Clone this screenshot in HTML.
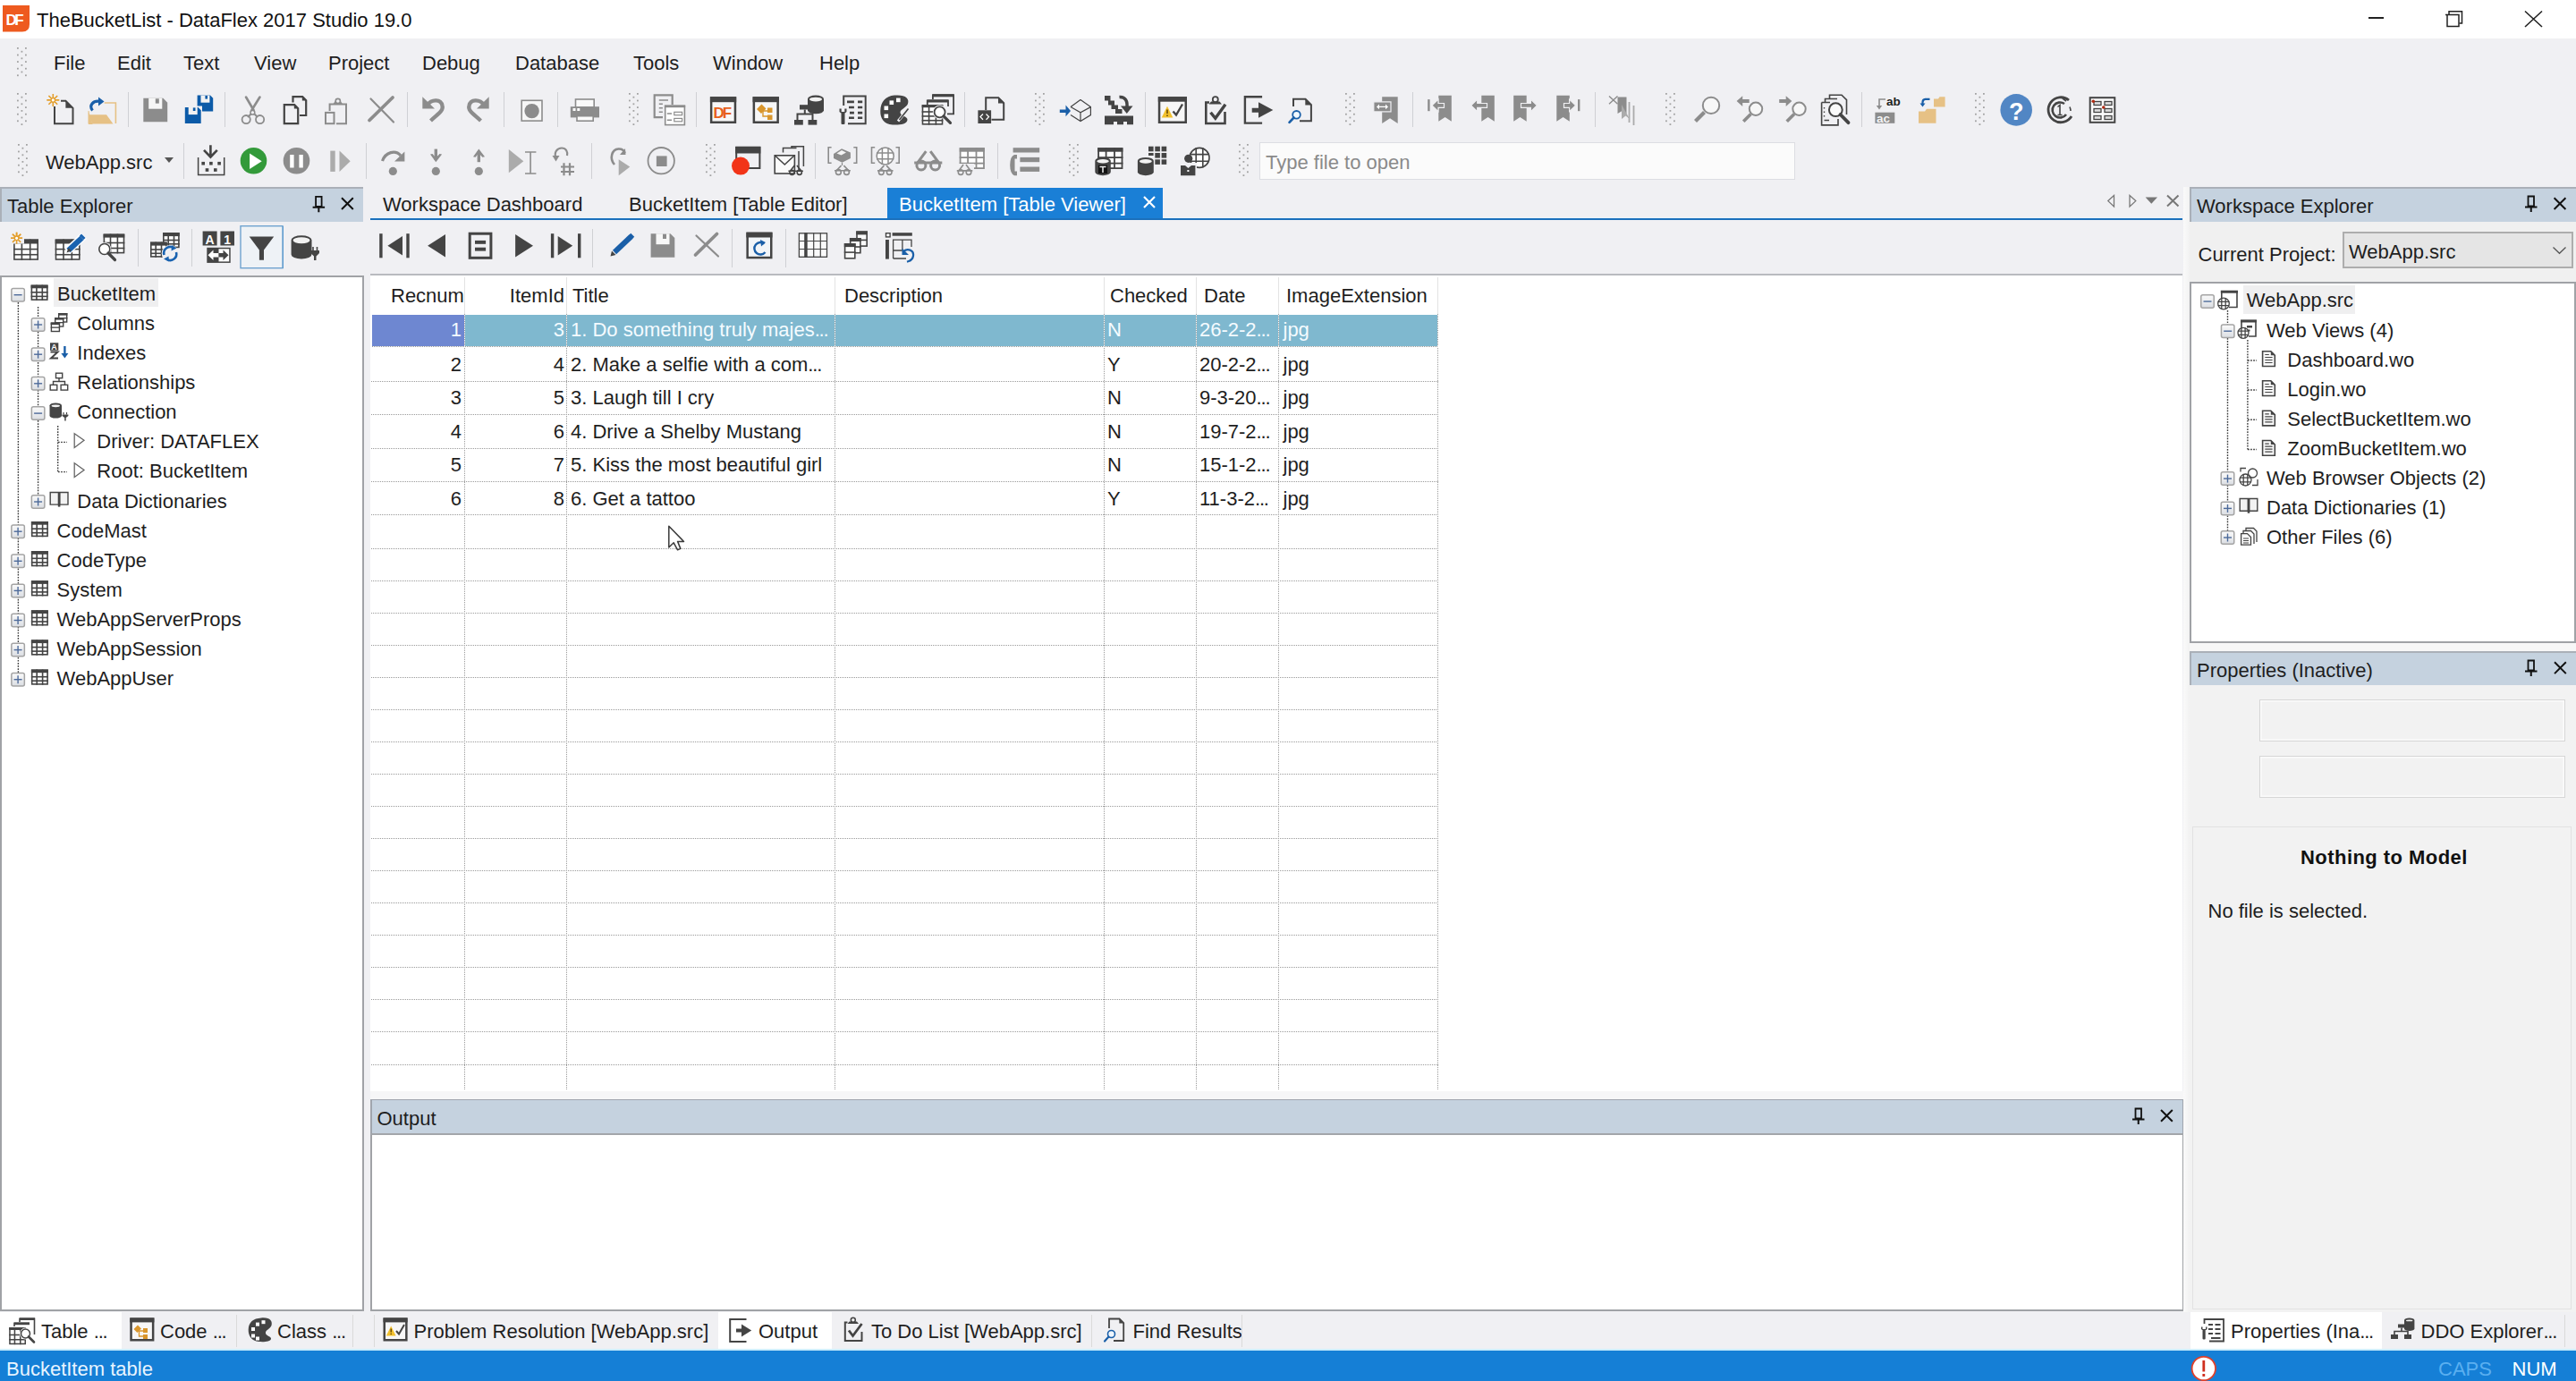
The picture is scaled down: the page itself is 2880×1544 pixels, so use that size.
<!DOCTYPE html><html><head><meta charset="utf-8"><title>DataFlex Studio</title><style>
*{margin:0;padding:0}
html,body{width:2880px;height:1544px;overflow:hidden;background:#f0f0f3}
body{position:relative;font-family:"Liberation Sans",sans-serif}
.t{position:absolute;font-family:"Liberation Sans",sans-serif;line-height:25px;white-space:nowrap}
.r{position:absolute;display:block}
.ov{position:absolute;left:0;top:0;overflow:visible}
.grip{position:absolute;width:11px;background-image:radial-gradient(circle,#9a9a9a 0.9px,transparent 1.2px);background-size:5.5px 5.5px}
.hd{position:absolute;height:1px;background-image:linear-gradient(90deg,#9a9a9a 50%,transparent 50%);background-size:2px 1px}
.vd{position:absolute;width:1px;background-image:linear-gradient(180deg,#9a9a9a 50%,transparent 50%);background-size:1px 2px}
</style></head><body><div class="r" style="left:0px;top:0px;width:2880px;height:43px;background:#fff"></div>
<div class="t" style="left:41px;top:9.9px;font-size:22px;color:#111;font-weight:normal;">TheBucketList - DataFlex 2017 Studio 19.0</div>
<div class="r" style="left:2648px;top:19px;width:17px;height:2px;background:#222"></div>
<div class="r" style="left:0px;top:43px;width:2880px;height:166px;background:#f0f0f3"></div>
<div class="t" style="left:60px;top:58.2px;font-size:22px;color:#1e1e1e;font-weight:normal;">File</div>
<div class="t" style="left:131px;top:58.2px;font-size:22px;color:#1e1e1e;font-weight:normal;">Edit</div>
<div class="t" style="left:205px;top:58.2px;font-size:22px;color:#1e1e1e;font-weight:normal;">Text</div>
<div class="t" style="left:284px;top:58.2px;font-size:22px;color:#1e1e1e;font-weight:normal;">View</div>
<div class="t" style="left:367px;top:58.2px;font-size:22px;color:#1e1e1e;font-weight:normal;">Project</div>
<div class="t" style="left:472px;top:58.2px;font-size:22px;color:#1e1e1e;font-weight:normal;">Debug</div>
<div class="t" style="left:576px;top:58.2px;font-size:22px;color:#1e1e1e;font-weight:normal;">Database</div>
<div class="t" style="left:708px;top:58.2px;font-size:22px;color:#1e1e1e;font-weight:normal;">Tools</div>
<div class="t" style="left:797px;top:58.2px;font-size:22px;color:#1e1e1e;font-weight:normal;">Window</div>
<div class="t" style="left:916px;top:58.2px;font-size:22px;color:#1e1e1e;font-weight:normal;">Help</div>
<div class="r" style="left:143px;top:103px;width:1px;height:39px;background:#cfd0d4"></div>
<div class="r" style="left:251px;top:103px;width:1px;height:39px;background:#cfd0d4"></div>
<div class="r" style="left:455px;top:103px;width:1px;height:39px;background:#cfd0d4"></div>
<div class="r" style="left:563px;top:103px;width:1px;height:39px;background:#cfd0d4"></div>
<div class="r" style="left:623px;top:103px;width:1px;height:39px;background:#cfd0d4"></div>
<div class="r" style="left:778px;top:103px;width:1px;height:39px;background:#cfd0d4"></div>
<div class="r" style="left:1078px;top:103px;width:1px;height:39px;background:#cfd0d4"></div>
<div class="r" style="left:1280px;top:103px;width:1px;height:39px;background:#cfd0d4"></div>
<div class="r" style="left:1579px;top:103px;width:1px;height:39px;background:#cfd0d4"></div>
<div class="r" style="left:1783px;top:103px;width:1px;height:39px;background:#cfd0d4"></div>
<div class="r" style="left:2081px;top:103px;width:1px;height:39px;background:#cfd0d4"></div>
<div class="t" style="left:51px;top:168.9px;font-size:22px;color:#1e1e1e;font-weight:normal;">WebApp.src</div>
<svg class="r" style="left:184px;top:176px" width="10" height="6" viewBox="0 0 10 6"><path d="M0 0H10L5 6Z" fill="#555"/></svg>
<div class="r" style="left:205px;top:160px;width:1px;height:40px;background:#cfd0d4"></div>
<div class="r" style="left:409px;top:160px;width:1px;height:40px;background:#cfd0d4"></div>
<div class="r" style="left:661px;top:160px;width:1px;height:40px;background:#cfd0d4"></div>
<div class="r" style="left:911px;top:160px;width:1px;height:40px;background:#cfd0d4"></div>
<div class="r" style="left:1115px;top:160px;width:1px;height:40px;background:#cfd0d4"></div>
<div class="r" style="left:1408px;top:158.5px;width:598.5px;height:42.0px;background:#fbfbfb;border:1px solid #dcdde2;box-sizing:border-box"></div>
<div class="t" style="left:1415px;top:168.9px;font-size:22px;color:#8a8a8a;font-weight:normal;">Type file to open</div>
<div class="r" style="left:0px;top:209px;width:2880px;height:1258px;background:#f0f0f3"></div>
<div class="r" style="left:0px;top:209px;width:406px;height:38.5px;background:#c5d2df;border-top:2px solid #aab0b8;border-left:2px solid #aab0b8;box-sizing:border-box"></div>
<div class="t" style="left:8px;top:218.1px;font-size:22px;color:#1e1e1e;font-weight:normal;">Table Explorer</div>
<div class="r" style="left:154px;top:256px;width:1px;height:42px;background:#cfd0d4"></div>
<div class="r" style="left:214px;top:256px;width:1px;height:42px;background:#cfd0d4"></div>
<div class="r" style="left:268.5px;top:252.5px;width:48.0px;height:47.0px;border:1px solid #3b8fd8;box-sizing:border-box"></div>
<div class="r" style="left:0px;top:308px;width:407px;height:1157.5px;background:#fff;border:2px solid #a0a2a6;box-sizing:border-box"></div>
<div class="r" style="left:60.3px;top:311.4px;width:116.3px;height:32.10000000000002px;background:#efeff0"></div>
<div class="t" style="left:64px;top:315.8px;font-size:22px;color:#1e1e1e;font-weight:normal;">BucketItem</div>
<div class="t" style="left:86.3px;top:348.9px;font-size:22px;color:#1e1e1e;font-weight:normal;">Columns</div>
<div class="t" style="left:86.3px;top:382.0px;font-size:22px;color:#1e1e1e;font-weight:normal;">Indexes</div>
<div class="t" style="left:86.3px;top:415.1px;font-size:22px;color:#1e1e1e;font-weight:normal;">Relationships</div>
<div class="t" style="left:86.3px;top:448.2px;font-size:22px;color:#1e1e1e;font-weight:normal;">Connection</div>
<div class="t" style="left:108.3px;top:481.3px;font-size:22px;color:#1e1e1e;font-weight:normal;">Driver: DATAFLEX</div>
<div class="t" style="left:108.3px;top:514.4px;font-size:22px;color:#1e1e1e;font-weight:normal;">Root: BucketItem</div>
<div class="t" style="left:86.3px;top:547.5px;font-size:22px;color:#1e1e1e;font-weight:normal;">Data Dictionaries</div>
<div class="t" style="left:63.6px;top:580.6px;font-size:22px;color:#1e1e1e;font-weight:normal;">CodeMast</div>
<div class="t" style="left:63.6px;top:613.7px;font-size:22px;color:#1e1e1e;font-weight:normal;">CodeType</div>
<div class="t" style="left:63.6px;top:646.8px;font-size:22px;color:#1e1e1e;font-weight:normal;">System</div>
<div class="t" style="left:63.6px;top:679.9px;font-size:22px;color:#1e1e1e;font-weight:normal;">WebAppServerProps</div>
<div class="t" style="left:63.6px;top:713.0px;font-size:22px;color:#1e1e1e;font-weight:normal;">WebAppSession</div>
<div class="t" style="left:63.6px;top:746.1px;font-size:22px;color:#1e1e1e;font-weight:normal;">WebAppUser</div>
<div class="t" style="left:428px;top:215.7px;font-size:22px;color:#1e1e1e;font-weight:normal;">Workspace Dashboard</div>
<div class="t" style="left:703px;top:215.7px;font-size:22px;color:#1e1e1e;font-weight:normal;">BucketItem [Table Editor]</div>
<div class="r" style="left:991.5px;top:209.5px;width:308.5px;height:36.5px;background:#1a7fd6"></div>
<div class="t" style="left:1005px;top:215.7px;font-size:22px;color:#fff;font-weight:normal;">BucketItem [Table Viewer]</div>
<div class="r" style="left:414px;top:242.5px;width:577.5px;height:1.8000000000000114px;background:#e6f2fb"></div>
<div class="r" style="left:1300px;top:242.5px;width:1140px;height:1.8000000000000114px;background:#e6f2fb"></div>
<div class="r" style="left:414px;top:244.3px;width:2026px;height:2.0px;background:#1b70bb"></div>
<div class="r" style="left:662px;top:256px;width:1px;height:43px;background:#cfd0d4"></div>
<div class="r" style="left:818px;top:256px;width:1px;height:43px;background:#cfd0d4"></div>
<div class="r" style="left:878px;top:256px;width:1px;height:43px;background:#cfd0d4"></div>
<div class="r" style="left:414px;top:306px;width:2026px;height:914px;background:#fff;border-top:2px solid #b9bbbf;box-sizing:border-box"></div>
<div class="r" style="left:519.0px;top:310px;width:1.0px;height:41px;background:#e3e3e3"></div>
<div class="r" style="left:633.0px;top:310px;width:1.0px;height:41px;background:#e3e3e3"></div>
<div class="r" style="left:933.2px;top:310px;width:1.0px;height:41px;background:#e3e3e3"></div>
<div class="r" style="left:1233.5px;top:310px;width:1.0px;height:41px;background:#e3e3e3"></div>
<div class="r" style="left:1336.7px;top:310px;width:1.0px;height:41px;background:#e3e3e3"></div>
<div class="r" style="left:1429.3px;top:310px;width:1.0px;height:41px;background:#e3e3e3"></div>
<div class="r" style="left:1607.0px;top:310px;width:1.0px;height:41px;background:#e3e3e3"></div>
<div class="r" style="left:415.5px;top:351.5px;width:103.5px;height:35.5px;background:#6e87d1"></div>
<div class="r" style="left:520px;top:351.5px;width:1087px;height:35.5px;background:#7fb8cf"></div>
<div class="hd" style="left:415px;top:387.1px;width:1193px"></div>
<div class="hd" style="left:415px;top:425.5px;width:1193px"></div>
<div class="hd" style="left:415px;top:462.8px;width:1193px"></div>
<div class="hd" style="left:415px;top:500.5px;width:1193px"></div>
<div class="hd" style="left:415px;top:537.8px;width:1193px"></div>
<div class="hd" style="left:415px;top:575.3px;width:1193px"></div>
<div class="hd" style="left:415px;top:612.7px;width:1193px"></div>
<div class="hd" style="left:415px;top:648.8px;width:1193px"></div>
<div class="hd" style="left:415px;top:684.8px;width:1193px"></div>
<div class="hd" style="left:415px;top:720.8px;width:1193px"></div>
<div class="hd" style="left:415px;top:756.9px;width:1193px"></div>
<div class="hd" style="left:415px;top:792.9px;width:1193px"></div>
<div class="hd" style="left:415px;top:829.0px;width:1193px"></div>
<div class="hd" style="left:415px;top:865.0px;width:1193px"></div>
<div class="hd" style="left:415px;top:901.1px;width:1193px"></div>
<div class="hd" style="left:415px;top:937.1px;width:1193px"></div>
<div class="hd" style="left:415px;top:973.2px;width:1193px"></div>
<div class="hd" style="left:415px;top:1009.2px;width:1193px"></div>
<div class="hd" style="left:415px;top:1045.3px;width:1193px"></div>
<div class="hd" style="left:415px;top:1081.3px;width:1193px"></div>
<div class="hd" style="left:415px;top:1117.4px;width:1193px"></div>
<div class="hd" style="left:415px;top:1153.4px;width:1193px"></div>
<div class="hd" style="left:415px;top:1189.5px;width:1193px"></div>
<div class="vd" style="left:519.0px;top:351px;height:868px"></div>
<div class="vd" style="left:633.0px;top:351px;height:868px"></div>
<div class="vd" style="left:933.2px;top:351px;height:868px"></div>
<div class="vd" style="left:1233.5px;top:351px;height:868px"></div>
<div class="vd" style="left:1336.7px;top:351px;height:868px"></div>
<div class="vd" style="left:1429.3px;top:351px;height:868px"></div>
<div class="vd" style="left:1607.0px;top:351px;height:868px"></div>
<div class="vd" style="left:519.0px;top:351.5px;height:36px;background-image:linear-gradient(180deg,#ffffff 50%,transparent 50%)"></div>
<div class="vd" style="left:633.0px;top:351.5px;height:36px;background-image:linear-gradient(180deg,#ffffff 50%,transparent 50%)"></div>
<div class="vd" style="left:933.2px;top:351.5px;height:36px;background-image:linear-gradient(180deg,#ffffff 50%,transparent 50%)"></div>
<div class="vd" style="left:1233.5px;top:351.5px;height:36px;background-image:linear-gradient(180deg,#ffffff 50%,transparent 50%)"></div>
<div class="vd" style="left:1336.7px;top:351.5px;height:36px;background-image:linear-gradient(180deg,#ffffff 50%,transparent 50%)"></div>
<div class="vd" style="left:1429.3px;top:351.5px;height:36px;background-image:linear-gradient(180deg,#ffffff 50%,transparent 50%)"></div>
<div class="vd" style="left:1607.0px;top:351.5px;height:36px;background-image:linear-gradient(180deg,#ffffff 50%,transparent 50%)"></div>
<div class="hd" style="left:415px;top:387.1px;width:1193px;background-image:linear-gradient(90deg,#ffffff 50%,#9a9a9a 50%)"></div>
<div class="t" style="left:437px;top:317.9px;font-size:22px;color:#1e1e1e;font-weight:normal;">Recnum</div>
<div class="t" style="right:2249px;top:317.9px;font-size:22px;color:#1e1e1e;">ItemId</div>
<div class="t" style="left:640px;top:317.9px;font-size:22px;color:#1e1e1e;font-weight:normal;">Title</div>
<div class="t" style="left:944px;top:317.9px;font-size:22px;color:#1e1e1e;font-weight:normal;">Description</div>
<div class="t" style="left:1241px;top:317.9px;font-size:22px;color:#1e1e1e;font-weight:normal;">Checked</div>
<div class="t" style="left:1346px;top:317.9px;font-size:22px;color:#1e1e1e;font-weight:normal;">Date</div>
<div class="t" style="left:1438px;top:317.9px;font-size:22px;color:#1e1e1e;font-weight:normal;">ImageExtension</div>
<div class="t" style="right:2364px;top:356.4px;font-size:22px;color:#f4fbff;">1</div>
<div class="t" style="right:2249px;top:356.4px;font-size:22px;color:#f4fbff;">3</div>
<div class="t" style="left:638px;top:356.4px;font-size:22px;color:#f4fbff;font-weight:normal;">1. Do something truly majes<span style="letter-spacing:-1.2px">...</span></div>
<div class="t" style="left:1238px;top:356.4px;font-size:22px;color:#f4fbff;font-weight:normal;">N</div>
<div class="t" style="left:1341px;top:356.4px;font-size:22px;color:#f4fbff;font-weight:normal;">26-2-2<span style="letter-spacing:-1.2px">...</span></div>
<div class="t" style="left:1434.5px;top:356.4px;font-size:22px;color:#f4fbff;font-weight:normal;">jpg</div>
<div class="t" style="right:2364px;top:394.7px;font-size:22px;color:#1e1e1e;">2</div>
<div class="t" style="right:2249px;top:394.7px;font-size:22px;color:#1e1e1e;">4</div>
<div class="t" style="left:638px;top:394.7px;font-size:22px;color:#1e1e1e;font-weight:normal;">2. Make a selfie with a com<span style="letter-spacing:-1.2px">...</span></div>
<div class="t" style="left:1238px;top:394.7px;font-size:22px;color:#1e1e1e;font-weight:normal;">Y</div>
<div class="t" style="left:1341px;top:394.7px;font-size:22px;color:#1e1e1e;font-weight:normal;">20-2-2<span style="letter-spacing:-1.2px">...</span></div>
<div class="t" style="left:1434.5px;top:394.7px;font-size:22px;color:#1e1e1e;font-weight:normal;">jpg</div>
<div class="t" style="right:2364px;top:432.1px;font-size:22px;color:#1e1e1e;">3</div>
<div class="t" style="right:2249px;top:432.1px;font-size:22px;color:#1e1e1e;">5</div>
<div class="t" style="left:638px;top:432.1px;font-size:22px;color:#1e1e1e;font-weight:normal;">3. Laugh till I cry</div>
<div class="t" style="left:1238px;top:432.1px;font-size:22px;color:#1e1e1e;font-weight:normal;">N</div>
<div class="t" style="left:1341px;top:432.1px;font-size:22px;color:#1e1e1e;font-weight:normal;">9-3-20<span style="letter-spacing:-1.2px">...</span></div>
<div class="t" style="left:1434.5px;top:432.1px;font-size:22px;color:#1e1e1e;font-weight:normal;">jpg</div>
<div class="t" style="right:2364px;top:469.7px;font-size:22px;color:#1e1e1e;">4</div>
<div class="t" style="right:2249px;top:469.7px;font-size:22px;color:#1e1e1e;">6</div>
<div class="t" style="left:638px;top:469.7px;font-size:22px;color:#1e1e1e;font-weight:normal;">4. Drive a Shelby Mustang</div>
<div class="t" style="left:1238px;top:469.7px;font-size:22px;color:#1e1e1e;font-weight:normal;">N</div>
<div class="t" style="left:1341px;top:469.7px;font-size:22px;color:#1e1e1e;font-weight:normal;">19-7-2<span style="letter-spacing:-1.2px">...</span></div>
<div class="t" style="left:1434.5px;top:469.7px;font-size:22px;color:#1e1e1e;font-weight:normal;">jpg</div>
<div class="t" style="right:2364px;top:507.0px;font-size:22px;color:#1e1e1e;">5</div>
<div class="t" style="right:2249px;top:507.0px;font-size:22px;color:#1e1e1e;">7</div>
<div class="t" style="left:638px;top:507.0px;font-size:22px;color:#1e1e1e;font-weight:normal;">5. Kiss the most beautiful girl</div>
<div class="t" style="left:1238px;top:507.0px;font-size:22px;color:#1e1e1e;font-weight:normal;">N</div>
<div class="t" style="left:1341px;top:507.0px;font-size:22px;color:#1e1e1e;font-weight:normal;">15-1-2<span style="letter-spacing:-1.2px">...</span></div>
<div class="t" style="left:1434.5px;top:507.0px;font-size:22px;color:#1e1e1e;font-weight:normal;">jpg</div>
<div class="t" style="right:2364px;top:544.5px;font-size:22px;color:#1e1e1e;">6</div>
<div class="t" style="right:2249px;top:544.5px;font-size:22px;color:#1e1e1e;">8</div>
<div class="t" style="left:638px;top:544.5px;font-size:22px;color:#1e1e1e;font-weight:normal;">6. Get a tattoo</div>
<div class="t" style="left:1238px;top:544.5px;font-size:22px;color:#1e1e1e;font-weight:normal;">Y</div>
<div class="t" style="left:1341px;top:544.5px;font-size:22px;color:#1e1e1e;font-weight:normal;">11-3-2<span style="letter-spacing:-1.2px">...</span></div>
<div class="t" style="left:1434.5px;top:544.5px;font-size:22px;color:#1e1e1e;font-weight:normal;">jpg</div>
<div class="r" style="left:414px;top:1220px;width:2027px;height:9px;background:#f6f6f7"></div>
<div class="r" style="left:414px;top:1229px;width:2027px;height:40px;background:#c5d2df;border:1px solid #a0a5ad;border-left:2px solid #a0a5ad;border-bottom:2px solid #a3a6aa;box-sizing:border-box"></div>
<div class="t" style="left:421.5px;top:1238.1px;font-size:22px;color:#1e1e1e;font-weight:normal;">Output</div>
<div class="r" style="left:414px;top:1269px;width:2027px;height:196.5px;background:#fff;border:2px solid #a0a2a6;border-top:none;border-right:1px solid #a0a2a6;box-sizing:border-box"></div>
<div class="r" style="left:2441px;top:209px;width:7px;height:1258px;background:linear-gradient(90deg,#fafafa,#f2f2f2)"></div>
<div class="r" style="left:2448px;top:209px;width:432px;height:38.5px;background:#c5d2df;border-top:2px solid #aab0b8;border-left:2px solid #aab0b8;box-sizing:border-box"></div>
<div class="t" style="left:2456px;top:218.1px;font-size:22px;color:#1e1e1e;font-weight:normal;">Workspace Explorer</div>
<div class="r" style="left:2448px;top:247.5px;width:432px;height:67.5px;background:#f0f0f0"></div>
<div class="t" style="left:2457.5px;top:272.0px;font-size:22px;color:#1e1e1e;font-weight:normal;">Current Project:</div>
<div class="r" style="left:2619px;top:258.7px;width:258px;height:41.30000000000001px;background:#e5e5e5;border:2px solid #adadad;box-sizing:border-box"></div>
<div class="t" style="left:2626px;top:268.9px;font-size:22px;color:#1e1e1e;font-weight:normal;">WebApp.src</div>
<div class="r" style="left:2448px;top:315px;width:432px;height:404px;background:#fff;border:2px solid #a0a2a6;box-sizing:border-box"></div>
<div class="r" style="left:2508px;top:319px;width:125.30000000000018px;height:31.80000000000001px;background:#efeff0"></div>
<div class="t" style="left:2511.7px;top:323.4px;font-size:22px;color:#1e1e1e;font-weight:normal;">WebApp.src</div>
<div class="t" style="left:2534px;top:356.5px;font-size:22px;color:#1e1e1e;font-weight:normal;">Web Views (4)</div>
<div class="t" style="left:2557.3px;top:389.6px;font-size:22px;color:#1e1e1e;font-weight:normal;">Dashboard.wo</div>
<div class="t" style="left:2557.3px;top:422.7px;font-size:22px;color:#1e1e1e;font-weight:normal;">Login.wo</div>
<div class="t" style="left:2557.3px;top:455.8px;font-size:22px;color:#1e1e1e;font-weight:normal;">SelectBucketItem.wo</div>
<div class="t" style="left:2557.3px;top:488.9px;font-size:22px;color:#1e1e1e;font-weight:normal;">ZoomBucketItem.wo</div>
<div class="t" style="left:2534px;top:522.0px;font-size:22px;color:#1e1e1e;font-weight:normal;">Web Browser Objects (2)</div>
<div class="t" style="left:2534px;top:555.1px;font-size:22px;color:#1e1e1e;font-weight:normal;">Data Dictionaries (1)</div>
<div class="t" style="left:2534px;top:588.2px;font-size:22px;color:#1e1e1e;font-weight:normal;">Other Files (6)</div>
<div class="r" style="left:2448px;top:719px;width:432px;height:8.5px;background:#f7f7f7"></div>
<div class="r" style="left:2448px;top:727.5px;width:432px;height:38.5px;background:#c5d2df;border-top:2px solid #aab0b8;border-left:2px solid #aab0b8;box-sizing:border-box"></div>
<div class="t" style="left:2456px;top:736.9px;font-size:22px;color:#1e1e1e;font-weight:normal;">Properties (Inactive)</div>
<div class="r" style="left:2448px;top:766px;width:432px;height:701px;background:#f2f2f2"></div>
<div class="r" style="left:2526px;top:782px;width:342px;height:47px;background:#f2f2f2;border:1px solid #d6d6d6;box-shadow:inset 0 0 0 1.5px #fbfbfb;box-sizing:border-box"></div>
<div class="r" style="left:2526px;top:845px;width:342px;height:47px;background:#f2f2f2;border:1px solid #d6d6d6;box-shadow:inset 0 0 0 1.5px #fbfbfb;box-sizing:border-box"></div>
<div class="r" style="left:2451px;top:924px;width:424px;height:540px;border:1px solid #e2e2e2;box-sizing:border-box"></div>
<div class="t" style="left:2572px;top:945.6px;font-size:22px;color:#111;font-weight:bold;letter-spacing:0.45px">Nothing to Model</div>
<div class="t" style="left:2468.5px;top:1005.5px;font-size:22px;color:#1e1e1e;font-weight:normal;">No file is selected.</div>
<div class="r" style="left:0px;top:1467px;width:135.5px;height:41px;background:#fff"></div>
<div class="t" style="left:46px;top:1476.2px;font-size:22px;color:#1e1e1e;font-weight:normal;">Table <span style="letter-spacing:-1.2px">...</span></div>
<div class="t" style="left:179px;top:1476.2px;font-size:22px;color:#1e1e1e;font-weight:normal;">Code <span style="letter-spacing:-1.2px">...</span></div>
<div class="t" style="left:310px;top:1476.2px;font-size:22px;color:#1e1e1e;font-weight:normal;">Class <span style="letter-spacing:-1.2px">...</span></div>
<div class="r" style="left:264px;top:1470px;width:1px;height:36px;background:#dadada"></div>
<div class="r" style="left:394px;top:1470px;width:1px;height:36px;background:#dadada"></div>
<div class="r" style="left:803px;top:1467px;width:127px;height:41px;background:#fff"></div>
<div class="t" style="left:462.5px;top:1476.2px;font-size:22px;color:#1e1e1e;font-weight:normal;">Problem Resolution [WebApp.src]</div>
<div class="t" style="left:848px;top:1476.2px;font-size:22px;color:#1e1e1e;font-weight:normal;">Output</div>
<div class="t" style="left:974px;top:1476.2px;font-size:22px;color:#1e1e1e;font-weight:normal;">To Do List [WebApp.src]</div>
<div class="t" style="left:1266.5px;top:1476.2px;font-size:22px;color:#1e1e1e;font-weight:normal;">Find Results</div>
<div class="r" style="left:417.5px;top:1470px;width:1.0px;height:36px;background:#dadada"></div>
<div class="r" style="left:1220px;top:1470px;width:1px;height:36px;background:#dadada"></div>
<div class="r" style="left:1388px;top:1470px;width:1px;height:36px;background:#dadada"></div>
<div class="r" style="left:2449px;top:1467px;width:214px;height:41px;background:#fff"></div>
<div class="t" style="left:2494px;top:1476.2px;font-size:22px;color:#1e1e1e;font-weight:normal;">Properties (Ina<span style="letter-spacing:-1.2px">...</span></div>
<div class="t" style="left:2706.5px;top:1476.2px;font-size:22px;color:#1e1e1e;font-weight:normal;">DDO Explorer<span style="letter-spacing:-1.2px">...</span></div>
<div class="r" style="left:2867px;top:1470px;width:1px;height:36px;background:#dadada"></div>
<div class="r" style="left:0px;top:1508px;width:2880px;height:1.5px;background:#cdeefc"></div>
<div class="r" style="left:0px;top:1509.5px;width:2880px;height:34.5px;background:#157fd6"></div>
<div class="t" style="left:7px;top:1518.1px;font-size:22px;color:#e8f4ff;font-weight:normal;">BucketItem table</div>
<div class="t" style="left:2726px;top:1518.1px;font-size:22px;color:#5aaff0;font-weight:normal;">CAPS</div>
<div class="t" style="left:2808.5px;top:1518.1px;font-size:22px;color:#ffffff;font-weight:normal;">NUM</div>
<svg class="ov" width="2880" height="1544"><g fill="#a3a3a3"><rect x="19" y="53.0" width="1.8" height="1.8"/><rect x="28" y="53.0" width="1.8" height="1.8"/><rect x="23.5" y="56.8" width="1.8" height="1.8"/><rect x="19" y="60.6" width="1.8" height="1.8"/><rect x="28" y="60.6" width="1.8" height="1.8"/><rect x="23.5" y="64.4" width="1.8" height="1.8"/><rect x="19" y="68.2" width="1.8" height="1.8"/><rect x="28" y="68.2" width="1.8" height="1.8"/><rect x="23.5" y="72.0" width="1.8" height="1.8"/><rect x="19" y="75.8" width="1.8" height="1.8"/><rect x="28" y="75.8" width="1.8" height="1.8"/><rect x="23.5" y="79.6" width="1.8" height="1.8"/><rect x="19" y="83.4" width="1.8" height="1.8"/><rect x="28" y="83.4" width="1.8" height="1.8"/><rect x="19" y="104.0" width="1.8" height="1.8"/><rect x="28" y="104.0" width="1.8" height="1.8"/><rect x="23.5" y="107.8" width="1.8" height="1.8"/><rect x="19" y="111.6" width="1.8" height="1.8"/><rect x="28" y="111.6" width="1.8" height="1.8"/><rect x="23.5" y="115.4" width="1.8" height="1.8"/><rect x="19" y="119.2" width="1.8" height="1.8"/><rect x="28" y="119.2" width="1.8" height="1.8"/><rect x="23.5" y="123.0" width="1.8" height="1.8"/><rect x="19" y="126.8" width="1.8" height="1.8"/><rect x="28" y="126.8" width="1.8" height="1.8"/><rect x="23.5" y="130.6" width="1.8" height="1.8"/><rect x="19" y="134.4" width="1.8" height="1.8"/><rect x="28" y="134.4" width="1.8" height="1.8"/><rect x="23.5" y="138.2" width="1.8" height="1.8"/><rect x="703" y="104.0" width="1.8" height="1.8"/><rect x="712" y="104.0" width="1.8" height="1.8"/><rect x="707.5" y="107.8" width="1.8" height="1.8"/><rect x="703" y="111.6" width="1.8" height="1.8"/><rect x="712" y="111.6" width="1.8" height="1.8"/><rect x="707.5" y="115.4" width="1.8" height="1.8"/><rect x="703" y="119.2" width="1.8" height="1.8"/><rect x="712" y="119.2" width="1.8" height="1.8"/><rect x="707.5" y="123.0" width="1.8" height="1.8"/><rect x="703" y="126.8" width="1.8" height="1.8"/><rect x="712" y="126.8" width="1.8" height="1.8"/><rect x="707.5" y="130.6" width="1.8" height="1.8"/><rect x="703" y="134.4" width="1.8" height="1.8"/><rect x="712" y="134.4" width="1.8" height="1.8"/><rect x="707.5" y="138.2" width="1.8" height="1.8"/><rect x="1157" y="104.0" width="1.8" height="1.8"/><rect x="1166" y="104.0" width="1.8" height="1.8"/><rect x="1161.5" y="107.8" width="1.8" height="1.8"/><rect x="1157" y="111.6" width="1.8" height="1.8"/><rect x="1166" y="111.6" width="1.8" height="1.8"/><rect x="1161.5" y="115.4" width="1.8" height="1.8"/><rect x="1157" y="119.2" width="1.8" height="1.8"/><rect x="1166" y="119.2" width="1.8" height="1.8"/><rect x="1161.5" y="123.0" width="1.8" height="1.8"/><rect x="1157" y="126.8" width="1.8" height="1.8"/><rect x="1166" y="126.8" width="1.8" height="1.8"/><rect x="1161.5" y="130.6" width="1.8" height="1.8"/><rect x="1157" y="134.4" width="1.8" height="1.8"/><rect x="1166" y="134.4" width="1.8" height="1.8"/><rect x="1161.5" y="138.2" width="1.8" height="1.8"/><rect x="1504" y="104.0" width="1.8" height="1.8"/><rect x="1513" y="104.0" width="1.8" height="1.8"/><rect x="1508.5" y="107.8" width="1.8" height="1.8"/><rect x="1504" y="111.6" width="1.8" height="1.8"/><rect x="1513" y="111.6" width="1.8" height="1.8"/><rect x="1508.5" y="115.4" width="1.8" height="1.8"/><rect x="1504" y="119.2" width="1.8" height="1.8"/><rect x="1513" y="119.2" width="1.8" height="1.8"/><rect x="1508.5" y="123.0" width="1.8" height="1.8"/><rect x="1504" y="126.8" width="1.8" height="1.8"/><rect x="1513" y="126.8" width="1.8" height="1.8"/><rect x="1508.5" y="130.6" width="1.8" height="1.8"/><rect x="1504" y="134.4" width="1.8" height="1.8"/><rect x="1513" y="134.4" width="1.8" height="1.8"/><rect x="1508.5" y="138.2" width="1.8" height="1.8"/><rect x="1862" y="104.0" width="1.8" height="1.8"/><rect x="1871" y="104.0" width="1.8" height="1.8"/><rect x="1866.5" y="107.8" width="1.8" height="1.8"/><rect x="1862" y="111.6" width="1.8" height="1.8"/><rect x="1871" y="111.6" width="1.8" height="1.8"/><rect x="1866.5" y="115.4" width="1.8" height="1.8"/><rect x="1862" y="119.2" width="1.8" height="1.8"/><rect x="1871" y="119.2" width="1.8" height="1.8"/><rect x="1866.5" y="123.0" width="1.8" height="1.8"/><rect x="1862" y="126.8" width="1.8" height="1.8"/><rect x="1871" y="126.8" width="1.8" height="1.8"/><rect x="1866.5" y="130.6" width="1.8" height="1.8"/><rect x="1862" y="134.4" width="1.8" height="1.8"/><rect x="1871" y="134.4" width="1.8" height="1.8"/><rect x="1866.5" y="138.2" width="1.8" height="1.8"/><rect x="2208" y="104.0" width="1.8" height="1.8"/><rect x="2217" y="104.0" width="1.8" height="1.8"/><rect x="2212.5" y="107.8" width="1.8" height="1.8"/><rect x="2208" y="111.6" width="1.8" height="1.8"/><rect x="2217" y="111.6" width="1.8" height="1.8"/><rect x="2212.5" y="115.4" width="1.8" height="1.8"/><rect x="2208" y="119.2" width="1.8" height="1.8"/><rect x="2217" y="119.2" width="1.8" height="1.8"/><rect x="2212.5" y="123.0" width="1.8" height="1.8"/><rect x="2208" y="126.8" width="1.8" height="1.8"/><rect x="2217" y="126.8" width="1.8" height="1.8"/><rect x="2212.5" y="130.6" width="1.8" height="1.8"/><rect x="2208" y="134.4" width="1.8" height="1.8"/><rect x="2217" y="134.4" width="1.8" height="1.8"/><rect x="2212.5" y="138.2" width="1.8" height="1.8"/><rect x="20" y="161.0" width="1.8" height="1.8"/><rect x="29" y="161.0" width="1.8" height="1.8"/><rect x="24.5" y="164.8" width="1.8" height="1.8"/><rect x="20" y="168.6" width="1.8" height="1.8"/><rect x="29" y="168.6" width="1.8" height="1.8"/><rect x="24.5" y="172.4" width="1.8" height="1.8"/><rect x="20" y="176.2" width="1.8" height="1.8"/><rect x="29" y="176.2" width="1.8" height="1.8"/><rect x="24.5" y="180.0" width="1.8" height="1.8"/><rect x="20" y="183.8" width="1.8" height="1.8"/><rect x="29" y="183.8" width="1.8" height="1.8"/><rect x="24.5" y="187.6" width="1.8" height="1.8"/><rect x="20" y="191.4" width="1.8" height="1.8"/><rect x="29" y="191.4" width="1.8" height="1.8"/><rect x="24.5" y="195.2" width="1.8" height="1.8"/><rect x="789" y="161.0" width="1.8" height="1.8"/><rect x="798" y="161.0" width="1.8" height="1.8"/><rect x="793.5" y="164.8" width="1.8" height="1.8"/><rect x="789" y="168.6" width="1.8" height="1.8"/><rect x="798" y="168.6" width="1.8" height="1.8"/><rect x="793.5" y="172.4" width="1.8" height="1.8"/><rect x="789" y="176.2" width="1.8" height="1.8"/><rect x="798" y="176.2" width="1.8" height="1.8"/><rect x="793.5" y="180.0" width="1.8" height="1.8"/><rect x="789" y="183.8" width="1.8" height="1.8"/><rect x="798" y="183.8" width="1.8" height="1.8"/><rect x="793.5" y="187.6" width="1.8" height="1.8"/><rect x="789" y="191.4" width="1.8" height="1.8"/><rect x="798" y="191.4" width="1.8" height="1.8"/><rect x="793.5" y="195.2" width="1.8" height="1.8"/><rect x="1195" y="161.0" width="1.8" height="1.8"/><rect x="1204" y="161.0" width="1.8" height="1.8"/><rect x="1199.5" y="164.8" width="1.8" height="1.8"/><rect x="1195" y="168.6" width="1.8" height="1.8"/><rect x="1204" y="168.6" width="1.8" height="1.8"/><rect x="1199.5" y="172.4" width="1.8" height="1.8"/><rect x="1195" y="176.2" width="1.8" height="1.8"/><rect x="1204" y="176.2" width="1.8" height="1.8"/><rect x="1199.5" y="180.0" width="1.8" height="1.8"/><rect x="1195" y="183.8" width="1.8" height="1.8"/><rect x="1204" y="183.8" width="1.8" height="1.8"/><rect x="1199.5" y="187.6" width="1.8" height="1.8"/><rect x="1195" y="191.4" width="1.8" height="1.8"/><rect x="1204" y="191.4" width="1.8" height="1.8"/><rect x="1199.5" y="195.2" width="1.8" height="1.8"/><rect x="1385" y="161.0" width="1.8" height="1.8"/><rect x="1394" y="161.0" width="1.8" height="1.8"/><rect x="1389.5" y="164.8" width="1.8" height="1.8"/><rect x="1385" y="168.6" width="1.8" height="1.8"/><rect x="1394" y="168.6" width="1.8" height="1.8"/><rect x="1389.5" y="172.4" width="1.8" height="1.8"/><rect x="1385" y="176.2" width="1.8" height="1.8"/><rect x="1394" y="176.2" width="1.8" height="1.8"/><rect x="1389.5" y="180.0" width="1.8" height="1.8"/><rect x="1385" y="183.8" width="1.8" height="1.8"/><rect x="1394" y="183.8" width="1.8" height="1.8"/><rect x="1389.5" y="187.6" width="1.8" height="1.8"/><rect x="1385" y="191.4" width="1.8" height="1.8"/><rect x="1394" y="191.4" width="1.8" height="1.8"/><rect x="1389.5" y="195.2" width="1.8" height="1.8"/></g></svg>
<svg class="ov" width="2880" height="1544" viewBox="0 0 2880 1544"><defs><linearGradient id="expg" x1="0" y1="0" x2="0" y2="1"><stop offset="0" stop-color="#fbfbfb"/><stop offset="1" stop-color="#dadde2"/></linearGradient></defs><path d="M3 6H33V27Q33 35.5 25 35.5H3Z" fill="#ee5a1f"/><text x="6.5" y="28" font-family="Liberation Sans" font-weight="bold" font-size="17" fill="#fff" letter-spacing="-2.5">DF</text><path d="M2734 16.5H2749V29.5H2736V16.5" fill="none" stroke="#222" stroke-width="1.5"/><path d="M2738 16V12.8H2752.5V26H2749.5" fill="none" stroke="#222" stroke-width="1.5"/><path d="M2823 12.5L2842 30M2842 12.5L2823 30" stroke="#222" stroke-width="1.6"/><path d="M52.3 111.9L66.3 111.9M54.4 107.0L64.2 116.8M59.3 104.9L59.3 118.9M64.2 107.0L54.4 116.8" stroke="#e39e2c" stroke-width="1.6"/><circle cx="59.3" cy="111.9" r="2.2" fill="#fff" stroke="#e39e2c" stroke-width="1.2"/><path d="M61 119V138.2H81.5V120.8L73.4 112.7H68" fill="none" stroke="#444444" stroke-width="2"/><path d="M73.4 112.7V120.8H81.5Z" fill="#444444"/><path d="M116.7 115H129.4V138" fill="none" stroke="#e6c185" stroke-width="1.6"/><path d="M99 128.2H119L126.5 138.5H103.5Z" fill="#e6c185"/><path d="M99 124V138.5H103.5" fill="#e6c185" stroke="#e6c185" stroke-width="1"/><path d="M103.5 123.5C99 118 104 112 112 113.5" fill="none" stroke="#1a5fa8" stroke-width="3.2"/><path d="M110 108.5L116.5 113.5L110 118.5Z" fill="#1a5fa8"/><path d="M160.3 109.8H182.358L187.2 114.642V136.3H160.3Z" fill="#8c8c8c"/><rect x="166.2" y="109.8" width="15.1" height="11.9" fill="#f7f7f7"/><rect x="173.8" y="110.3" width="4.0" height="5.3" fill="#8c8c8c"/><path d="M220.6 106.6H235.03199999999998L238.2 109.76799999999999V124.5H220.6Z" fill="#0c5ba8"/><rect x="224.5" y="106.6" width="9.9" height="8.1" fill="#f2f2f2"/><rect x="229.4" y="107.0" width="2.6" height="3.6" fill="#0c5ba8"/><rect x="205" y="118.5" width="21" height="21" fill="#f0f0f3"/><path d="M206.8 120H221.47799999999998L224.7 123.222V138H206.8Z" fill="#0c5ba8"/><rect x="210.7" y="120" width="10.0" height="8.1" fill="#f2f2f2"/><rect x="215.8" y="120.4" width="2.7" height="3.6" fill="#0c5ba8"/><path d="M275 108.5L283.5 123M290.5 108.5L281.5 123" stroke="#8c8c8c" stroke-width="2.6" stroke-linecap="round"/><circle cx="282.4" cy="125.7" r="2.4" fill="none" stroke="#8c8c8c" stroke-width="1.5"/><path d="M280.5 127.5L277 131M284.5 127.5L288 131" stroke="#8c8c8c" stroke-width="2"/><circle cx="275.2" cy="133.6" r="4.6" fill="none" stroke="#8c8c8c" stroke-width="1.8"/><circle cx="290.6" cy="133.6" r="4.6" fill="none" stroke="#8c8c8c" stroke-width="1.8"/><path d="M327.5 114.5V108.2H338.2L342.2 112.2V129H335" fill="none" stroke="#444444" stroke-width="2.2"/><path d="M337.8 108V112.6H342.4Z" fill="#444444"/><path d="M317.8 117.2H329.2L333.2 121.2V138.1H317.8Z" fill="none" stroke="#444444" stroke-width="2.2"/><path d="M328.8 117V121.6H333.4Z" fill="#444444"/><path d="M368.6 124V116.5H387V138.2H376" fill="none" stroke="#8c8c8c" stroke-width="2"/><path d="M372 117L375 112.5H380.5L383.5 117Z" fill="#8c8c8c"/><circle cx="377.8" cy="113" r="2.6" fill="#f0f0f3" stroke="#8c8c8c" stroke-width="1.6"/><rect x="364" y="125.9" width="9.5" height="12.3" fill="none" stroke="#8c8c8c" stroke-width="2"/><path d="M414.5 110.5L440 136.5" stroke="#8c8c8c" stroke-width="2.2" stroke-linecap="round"/><path d="M439 109L413 134.5" stroke="#8c8c8c" stroke-width="3.8" stroke-linecap="round"/><path d="M477.5 117.5C483 110 493 111 494.5 118C496 124 490 127 481.5 135" fill="none" stroke="#8c8c8c" stroke-width="4.3"/><path d="M472.3 108.2V121.6H486Z" fill="#8c8c8c"/><path d="M541.5 117.5C536 110 526 111 524.5 118C523 124 529 127 537.5 135" fill="none" stroke="#8c8c8c" stroke-width="4.3"/><path d="M546.7 108.2V121.6H533Z" fill="#8c8c8c"/><rect x="583.2" y="112.3" width="22.8" height="22.8" fill="#f7f7f7" stroke="#8c8c8c" stroke-width="1.6"/><circle cx="594.6" cy="124.1" r="8.2" fill="#8c8c8c"/><rect x="643.5" y="111" width="20.7" height="9" fill="#fafafa" stroke="#8c8c8c" stroke-width="1.6"/><rect x="637.8" y="119.2" width="32.2" height="12.2" fill="#8c8c8c"/><rect x="640.5" y="121" width="3" height="3" fill="#fff"/><rect x="645.3" y="121" width="3" height="3" fill="#fff"/><rect x="645" y="129.7" width="18.2" height="5.5" fill="#fafafa" stroke="#8c8c8c" stroke-width="1.6"/><path d="M741 131.2H731.7V106.3H751.7V117" fill="none" stroke="#8c8c8c" stroke-width="2.2"/><path d="M736.8 111.9H747M736.8 116.3H740.9M736.8 120.8H740.9M736.8 125.3H740.9" stroke="#8c8c8c" stroke-width="1.5"/><rect x="743.7" y="118.4" width="21.7" height="21.2" fill="#fff" stroke="#8c8c8c" stroke-width="1.6"/><rect x="742.9" y="117.6" width="23.3" height="2.6" fill="#8c8c8c"/><path d="M745.8 127H751M745.8 134.3H751" stroke="#8c8c8c" stroke-width="1.4"/><rect x="753.8" y="125.3" width="8.8" height="3.4" fill="none" stroke="#8c8c8c" stroke-width="1.2"/><rect x="753.8" y="132.4" width="8.8" height="3.4" fill="none" stroke="#8c8c8c" stroke-width="1.2"/><rect x="795.15" y="109.45" width="26.800000000000068" height="27.299999999999997" fill="#f7f7f7" stroke="#444444" stroke-width="2.5"/><rect x="793.9" y="108.2" width="29.300000000000068" height="6" fill="#444444"/><text x="797.5" y="131.5" font-family="Liberation Sans" font-weight="bold" font-size="17" fill="#e8601c" letter-spacing="-2">DF</text><rect x="842.85" y="109.45" width="26.799999999999955" height="27.299999999999997" fill="#f7f7f7" stroke="#444444" stroke-width="2.5"/><rect x="841.6" y="108.2" width="29.299999999999955" height="6" fill="#444444"/><path d="M846 122L851.5 116.5L856.5 121.5L851 127Z" fill="#d9962c"/><path d="M853 124V130H859M853 124H859" fill="none" stroke="#d9962c" stroke-width="1.4"/><rect x="858" y="120.5" width="5.5" height="5.5" fill="#d9962c"/><rect x="858" y="128.5" width="5.5" height="5.5" fill="#d9962c"/><path d="M903 110.55999999999999A9.0 3.96 0 0 1 921 110.55999999999999V123.34A9.0 3.96 0 0 1 903 123.34Z" fill="#444444"/><ellipse cx="912.0" cy="111.05999999999999" rx="7.0" ry="2.4" fill="#f2f2f2"/><rect x="894" y="117.2" width="11.6" height="5.3" fill="#444444"/><path d="M899.8 122.5V127.5M891.5 134V127.5H908.5V134" fill="none" stroke="#444444" stroke-width="2"/><rect x="888" y="134" width="9.8" height="5.6" fill="#444444"/><rect x="903.5" y="134" width="9.8" height="5.6" fill="#444444"/><path d="M943.2 118V107.6H967.7V138.2H948" fill="none" stroke="#444444" stroke-width="2"/><path d="M947 113.9H954.9M959 113.9H964.2M949 120H954.9M959 120H964.2M950 126.1H954.9M959 126.1H964.2M949 131.8H954.9M959 131.8H964.2" stroke="#444444" stroke-width="2.6"/><path d="M938.5 125A5 5 0 0 0 946.5 125V121.5H944.3V125H940.7V121.5H938.5Z" fill="#444444"/><rect x="940.5" y="126" width="4" height="13" rx="1" fill="#444444"/><path d="M1000 106.6C1012 105.5 1017 110 1015 116C1013 121 1006 122 1006.5 126C1007 130 1015 130 1014.5 134C1014 139 1005 140 998 139.5C988 139 984 132 984.3 124C984.5 114 990 107.5 1000 106.6Z" fill="#444444"/><rect x="988.5" y="118.5" width="4.6" height="4.6" fill="#fff"/><rect x="994.5" y="112.4" width="4.6" height="4.6" fill="#fff"/><rect x="1002" y="109.6" width="4.6" height="4.6" fill="#fff"/><rect x="988.5" y="127.5" width="4.6" height="4.6" fill="#fff"/><path d="M1016 121L1004 135.5" stroke="#f0f0f3" stroke-width="3"/><path d="M1015.5 121.5L1005.5 134" stroke="#444" stroke-width="1.6"/><path d="M1042.9 111V106.2H1066.1V127.3H1059" fill="none" stroke="#444444" stroke-width="1.8"/><rect x="1042.9" y="105.3" width="23.2" height="3" fill="#444444"/><path d="M1036.8 117V112.4H1060V119" fill="none" stroke="#444444" stroke-width="1.8"/><rect x="1036.8" y="111.5" width="23.2" height="3" fill="#444444"/><rect x="1031.5" y="118.0" width="21.999999999999908" height="20.79999999999999" fill="#fff" stroke="#444444" stroke-width="1.6"/><rect x="1030.7" y="117.2" width="23.59999999999991" height="3" fill="#444444"/><rect x="1030.7" y="124.2" width="23.59999999999991" height="1.6" fill="#444444"/><rect x="1030.7" y="129.1" width="23.59999999999991" height="1.6" fill="#444444"/><rect x="1030.7" y="133.9" width="23.59999999999991" height="1.6" fill="#444444"/><rect x="1037.8" y="117.2" width="1.6" height="22.39999999999999" fill="#444444"/><rect x="1045.6" y="117.2" width="1.6" height="22.39999999999999" fill="#444444"/><circle cx="1050.6" cy="125.3" r="6.8" fill="#f0f0f3" stroke="#f0f0f3" stroke-width="2"/><circle cx="1050.6" cy="125.3" r="6" fill="#fff" stroke="#444444" stroke-width="1.8"/><path d="M1055 129.8L1062.5 137.3" stroke="#444444" stroke-width="3.2" stroke-linecap="round"/><path d="M1102.2 123V109.2H1116.2L1122.2 115.2V133.7H1108.5" fill="none" stroke="#444444" stroke-width="2"/><path d="M1116 108.5V115.4H1122.9Z" fill="#444444"/><rect x="1093.4" y="123.3" width="14.7" height="14.7" fill="#444444"/><path d="M1099 127.5L1096 130.6L1099 133.7M1102.5 127.5L1105.5 130.6L1102.5 133.7" fill="none" stroke="#fff" stroke-width="1.3"/><path d="M1184.8 122.5H1191.5V117.6L1197 124.1L1191.5 130.2V126H1184.8Z" fill="#1a5fa8"/><path d="M1208 111.5L1219.4 119.6V128.6L1208 135.5L1197 128.6M1197 119.6L1208 111.5M1197 119.6L1208 125.7L1219.4 119.6M1208 125.7V135.5" fill="none" stroke="#444444" stroke-width="1.2"/><path d="M1235 107H1241.5V112.5H1246V117.5H1250V122H1254.5V127H1247V122H1242.5V117.5H1239V112.5H1235Z" fill="#444444"/><path d="M1235 129.4H1267V139.2H1260V136H1256V139.2H1249V136H1245V139.2H1235Z" fill="#444444"/><path d="M1251.5 108.5C1258 108 1261 113 1259.8 121" fill="none" stroke="#444444" stroke-width="3.5"/><path d="M1253 118.5L1259.8 127L1266.5 118.5Z" fill="#444444"/><rect x="1296.05" y="109.45" width="29.700000000000045" height="27.299999999999997" fill="#f7f7f7" stroke="#444444" stroke-width="2.5"/><rect x="1294.8" y="108.2" width="32.200000000000045" height="5.5" fill="#444444"/><path d="M1305 118.8L1311.3 131.4H1298.7Z" fill="#f2c12e"/><path d="M1305 122.5V127M1305 128.5V130" stroke="#4a3000" stroke-width="1.3"/><path d="M1311.5 124.5L1315 128.5L1322 116.5" fill="none" stroke="#444444" stroke-width="2.4"/><path d="M1352 114.5H1348.3V138H1369.5V125" fill="none" stroke="#444444" stroke-width="2.6"/><path d="M1351.5 116.5L1354 113.5H1363.5L1366 116.5Z" fill="#444444"/><circle cx="1358.8" cy="111.2" r="3" fill="#f0f0f3" stroke="#444444" stroke-width="1.8"/><path d="M1353.5 125.7L1358.8 132.2L1370 116.7" fill="none" stroke="#444444" stroke-width="3.4"/><path d="M1411.1 108.2H1391.9V137.6H1411.1" fill="none" stroke="#444444" stroke-width="2.4"/><path d="M1399.7 120.8H1407V114.3L1423.3 122.9L1407 131.8V125.7H1399.7Z" fill="#444444"/><path d="M1446 119V110.8H1459.5L1465.9 117.2V135.3H1453" fill="none" stroke="#444444" stroke-width="2"/><path d="M1459.3 110V117.4H1466.6Z" fill="#444444"/><circle cx="1449.5" cy="128.3" r="4.3" fill="#f0f8ff" stroke="#1a5fa8" stroke-width="1.8"/><path d="M1446.5 131.5L1441.5 136.8" stroke="#1a5fa8" stroke-width="2.6" stroke-linecap="round"/><path d="M1545.2 108.2H1562.7V138L1554 132.2L1545.2 138Z" fill="#8c8c8c"/><rect x="1535.8" y="113.9" width="19.2" height="11" fill="#8c8c8c" stroke="#f0f0f3" stroke-width="1.2"/><path d="M1539 119.4L1542 116.5V122.3ZM1552 119.4L1549 116.5V122.3Z" fill="#fff"/><path d="M1541 119.4H1550" stroke="#fff" stroke-width="1.3"/><path d="M1608.3 106.7H1622.8V135.8L1615.55 131L1608.3 135.8Z" fill="#8c8c8c"/><path d="M1601 117.9L1608 111.1V115.5H1614.5V120.3H1608V124.7Z" fill="#8c8c8c" stroke="#f0f0f3" stroke-width="1.2"/><rect x="1596.2" y="111.1" width="2.4" height="13.1" fill="#8c8c8c"/><path d="M1656.3 106.7H1670.8V135.8L1663.55 131L1656.3 135.8Z" fill="#8c8c8c"/><path d="M1644.7 117.9L1651.7 111.1V115.5H1662.5V120.3H1651.7V124.7Z" fill="#8c8c8c" stroke="#f0f0f3" stroke-width="1.2"/><path d="M1692.2 106.7H1706.7V135.8L1699.45 131L1692.2 135.8Z" fill="#8c8c8c"/><path d="M1718.4 117.9L1711.4 111.1V115.5H1700.5V120.3H1711.4V124.7Z" fill="#8c8c8c" stroke="#f0f0f3" stroke-width="1.2"/><path d="M1740.3 106.7H1754.8V135.8L1747.55 131L1740.3 135.8Z" fill="#8c8c8c"/><path d="M1761.6 117.9L1754.6 111.1V115.5H1748.5V120.3H1754.6V124.7Z" fill="#8c8c8c" stroke="#f0f0f3" stroke-width="1.2"/><rect x="1764" y="111.1" width="2.4" height="13.1" fill="#8c8c8c"/><path d="M1799 107.5L1808.5 116.3M1808.5 107.5L1799 116.3" stroke="#8c8c8c" stroke-width="1.4"/><path d="M1808.5 108.5H1818.5V127L1813.5 124L1808.5 127Z" fill="#8c8c8c"/><path d="M1813 117V133L1817.5 129.5L1822 133" fill="#ababab"/><path d="M1821.5 114V137M1826.5 118V140" stroke="#ababab" stroke-width="1.8"/><circle cx="1913" cy="117.9" r="9.2" fill="#f7f7f7" stroke="#8c8c8c" stroke-width="2"/><path d="M1905.5 125.5L1895.5 135.5" stroke="#8c8c8c" stroke-width="4.2" stroke-linecap="butt"/><circle cx="1963" cy="121.8" r="7.2" fill="#f7f7f7" stroke="#8c8c8c" stroke-width="2"/><path d="M1957.5 127.5L1949.2 135.8" stroke="#8c8c8c" stroke-width="3.6"/><path d="M1941.6 113L1948.2 107.2V111H1955.7V115H1948.2V118.9Z" fill="#8c8c8c"/><circle cx="2011.5" cy="121.8" r="7.2" fill="#f7f7f7" stroke="#8c8c8c" stroke-width="2"/><path d="M2006 127.5L1997.7 135.8" stroke="#8c8c8c" stroke-width="3.6"/><path d="M2003.3 113L1996.7 107.2V111H1989.2V115H1996.7V118.9Z" fill="#8c8c8c"/><path d="M2045.5 110V106.2H2059L2064.5 111.7V128" fill="none" stroke="#444444" stroke-width="1.6"/><path d="M2040.5 114V110.5H2054" fill="none" stroke="#444444" stroke-width="1.6"/><path d="M2036.6 114.5H2046M2036.6 114.5V139.9H2055V133" fill="none" stroke="#444444" stroke-width="1.6"/><path d="M2039.5 120V121.5M2039.5 124.5V126M2039.5 129V130.5M2039.5 134.5H2045" stroke="#444444" stroke-width="1.4"/><circle cx="2052.3" cy="122.7" r="7.4" fill="#fafafa" stroke="#444444" stroke-width="2"/><path d="M2057.5 128L2066.5 137.2" stroke="#444444" stroke-width="3.8" stroke-linecap="round"/><text x="2109" y="117.8" font-family="Liberation Sans" font-weight="bold" font-size="13.5" fill="#222">ab</text><path d="M2108 111H2101V119.5" fill="none" stroke="#8c8c8c" stroke-width="1.6"/><path d="M2097.8 118L2101 122.5L2104.2 118Z" fill="#8c8c8c"/><rect x="2096.4" y="125.7" width="21.9" height="12.1" fill="#8c8c8c"/><text x="2098" y="136.5" font-family="Liberation Sans" font-weight="bold" font-size="13.5" fill="#f4f4f4">ac</text><path d="M2162 110.5H2167L2168.5 108.2H2174.6V119.4H2162Z" fill="#e6c185"/><path d="M2145 124.5H2152L2154 121.8H2164.5V137.8H2145Z" fill="#e6c185"/><path d="M2157.5 110.8H2152.5Q2149.5 111 2149.5 114.5V117" fill="none" stroke="#1a5fa8" stroke-width="2.2"/><path d="M2146.5 115.5L2149.5 119.5L2152.5 115.5Z" fill="#1a5fa8"/><circle cx="2254.2" cy="122.9" r="17.8" fill="#5186c4"/><text x="2254.2" y="133.5" text-anchor="middle" font-family="Liberation Sans" font-weight="bold" font-size="27" fill="#fff">?</text><path d="M2313 112A14 14 0 1 0 2316 130" fill="none" stroke="#444444" stroke-width="2.8"/><path d="M2308 116A8.5 8.5 0 1 0 2310 128" fill="none" stroke="#444444" stroke-width="2.6"/><path d="M2300.5 119.5L2303 117.5V128.5M2300.5 128.5H2305.5" fill="none" stroke="#444444" stroke-width="1.6"/><path d="M2306 110L2310 113M2314 119.5A13 13 0 0 1 2315 124" fill="none" stroke="#444444" stroke-width="1.6"/><rect x="2336.7" y="109.2" width="27.6" height="27.6" fill="#fafafa" stroke="#444444" stroke-width="2"/><rect x="2341" y="113.5" width="8" height="4" fill="#ddd" stroke="#444444" stroke-width="1.3"/><rect x="2353" y="113.5" width="8" height="4" fill="#ddd" stroke="#444444" stroke-width="1.3"/><rect x="2341" y="121.5" width="8" height="4" fill="#ddd" stroke="#444444" stroke-width="1.3"/><rect x="2353" y="121.5" width="8" height="4" fill="#ddd" stroke="#444444" stroke-width="1.3"/><rect x="2341" y="129.5" width="8" height="4" fill="#ddd" stroke="#444444" stroke-width="1.3"/><rect x="2353" y="129.5" width="8" height="4" fill="#ddd" stroke="#444444" stroke-width="1.3"/><circle cx="2340.3" cy="113.2" r="1.8" fill="#b02a10"/><circle cx="2351.8" cy="120" r="1.8" fill="#b02a10"/><path d="M221.6 176V195.5H250.7V176" fill="none" stroke="#444444" stroke-width="1.5"/><path d="M235.4 162.3V176M228 167.8L235.4 175.5L242.8 167.8" fill="none" stroke="#444444" stroke-width="2.6"/><rect x="225.39999999999998" y="180.89999999999998" width="3.6" height="3.6" fill="#444444"/><rect x="234.1" y="180.89999999999998" width="3.6" height="3.6" fill="#444444"/><rect x="243.29999999999998" y="180.89999999999998" width="3.6" height="3.6" fill="#444444"/><rect x="229.7" y="188.2" width="3.6" height="3.6" fill="#444444"/><rect x="239.0" y="188.2" width="3.6" height="3.6" fill="#444444"/><circle cx="283.5" cy="179.7" r="14.8" fill="#339a3a"/><path d="M279.1 171.5L292.7 180.2L279.1 189Z" fill="#fff"/><circle cx="331.5" cy="179.7" r="14.8" fill="#8c8c8c"/><rect x="324.2" y="173" width="4.4" height="14.5" fill="#fff"/><rect x="334.4" y="173" width="4.4" height="14.5" fill="#fff"/><rect x="369.3" y="168.6" width="5.4" height="23.3" fill="#ababab"/><path d="M379.5 168.6L391.7 180.2L379.5 191.9Z" fill="#ababab"/><path d="M427.5 180C431 170 442 167 448 174" fill="none" stroke="#8c8c8c" stroke-width="3.2"/><path d="M441 180.5H452.4V169.5Z" fill="#8c8c8c"/><circle cx="439.3" cy="191.4" r="4.6" fill="#8c8c8c"/><path d="M487.3 166.6V179" stroke="#8c8c8c" stroke-width="3.4"/><path d="M481 172.5L487.3 181.2L494.1 172.5L491.5 172L487.3 176.5L483.5 172Z" fill="#8c8c8c"/><circle cx="487.3" cy="191.4" r="4.6" fill="#8c8c8c"/><path d="M535.3 181.2V169" stroke="#8c8c8c" stroke-width="3.4"/><path d="M529 175.3L535.3 166.6L542 175.3L539.4 175.8L535.3 171.3L531.5 175.8Z" fill="#8c8c8c"/><circle cx="535.3" cy="191.4" r="4.6" fill="#8c8c8c"/><path d="M568.8 167.1L585.3 180.2L568.8 193.3Z" fill="#ababab"/><path d="M587 170H599.4M587 194H599.4M593.1 170V194" stroke="#8c8c8c" stroke-width="1.6"/><path d="M621.5 177C619 170 623 165.5 628 165.5C633 165.5 635 170 634 174" fill="none" stroke="#8c8c8c" stroke-width="2.2"/><path d="M617.5 174L621.5 180.5L625.5 174Z" fill="#8c8c8c"/><path d="M630.5 182.2V196.2M637 182.2V196.2M627 186.5H642M627 192H642" stroke="#8c8c8c" stroke-width="2.2"/><path d="M687 184C681 177 684 167 691.5 166.5C696 166.3 698 169 698.5 171" fill="none" stroke="#8c8c8c" stroke-width="2.6"/><path d="M693 173L699.5 173L699 166Z" fill="#8c8c8c"/><path d="M691.7 178.3L704.3 186.5L691.7 196.2Z" fill="#ababab"/><circle cx="739.2" cy="179.7" r="14.7" fill="none" stroke="#8c8c8c" stroke-width="1.8"/><rect x="733.9" y="174.4" width="11.7" height="11.6" fill="#8c8c8c"/><path d="M823.2 180V165H849.4V188H836" fill="none" stroke="#444444" stroke-width="2"/><rect x="822.2" y="163.7" width="28.2" height="7.8" fill="#444444"/><circle cx="828" cy="185.6" r="10" fill="#f23418"/><path d="M875.5 170.5V165.5H890.5M885 165V163.7H898.4V186" fill="none" stroke="#444444" stroke-width="1.5"/><path d="M893 169V190" stroke="#444444" stroke-width="1.5"/><rect x="866.2" y="173.8" width="22.2" height="20.2" fill="#fafafa" stroke="#444444" stroke-width="1.6"/><path d="M866.5 174L877.3 184L888 174" fill="none" stroke="#444444" stroke-width="1.6"/><circle cx="885.5" cy="192.8" r="2.6" fill="none" stroke="#444444" stroke-width="1.6"/><circle cx="893.8" cy="192.8" r="2.6" fill="none" stroke="#444444" stroke-width="1.6"/><path d="M881.4 191.2H897.9M883.4 191.2L888.3 185M895.9 191.2L891.0 185" stroke="#444444" stroke-width="1.6" fill="none"/><path d="M929.6 164.7H926.2V182.2H929.6M954.3 164.7H957.7V182.2H954.3" fill="none" stroke="#8c8c8c" stroke-width="1.6"/><path d="M932 172L941 166.2L950.9 170.5V177L941.5 181.7L932 177Z" fill="#8c8c8c"/><path d="M935.5 171.5L941 168L946 170.5L940.5 173.5Z" fill="#f4f4f4"/><path d="M941.5 182V185" stroke="#8c8c8c" stroke-width="1.2"/><circle cx="937.4" cy="192.5" r="2.9" fill="none" stroke="#8c8c8c" stroke-width="1.6"/><circle cx="946.5" cy="192.5" r="2.9" fill="none" stroke="#8c8c8c" stroke-width="1.6"/><path d="M933 190.8H950.9M935.1 190.8L940.5 185.1M948.8 190.8L943.4 185.1" stroke="#8c8c8c" stroke-width="1.6" fill="none"/><path d="M978.2 164.7H974.5V182.2H978.2M1001.5 164.7H1005.2V182.2H1001.5" fill="none" stroke="#8c8c8c" stroke-width="1.6"/><circle cx="989.7" cy="174.4" r="9.5" fill="#fff" stroke="#8c8c8c" stroke-width="1.5"/><path d="M980.2 171.1H999.2M980.2 177.7H999.2M986.4 164.9V183.9M993.0 164.9V183.9" stroke="#8c8c8c" stroke-width="1.5"/><circle cx="985.3" cy="192.6" r="2.8" fill="none" stroke="#8c8c8c" stroke-width="1.6"/><circle cx="994.2" cy="192.6" r="2.8" fill="none" stroke="#8c8c8c" stroke-width="1.6"/><path d="M981 190.9H998.5M983.1 190.9L988.4 185.1M996.4 190.9L991.1 185.1" stroke="#8c8c8c" stroke-width="1.6" fill="none"/><circle cx="1029.9" cy="184.9" r="5.0" fill="none" stroke="#8c8c8c" stroke-width="3"/><circle cx="1045.6" cy="184.9" r="5.0" fill="none" stroke="#8c8c8c" stroke-width="3"/><path d="M1022.2 181.9H1053.3M1025.9 181.9L1035.3 169.1M1049.6 181.9L1040.2 169.1" stroke="#8c8c8c" stroke-width="3" fill="none"/><rect x="1073.6000000000001" y="166.1" width="26.400000000000045" height="22.00000000000001" fill="#fff" stroke="#8c8c8c" stroke-width="1.8"/><rect x="1072.7" y="165.2" width="28.200000000000045" height="4.5" fill="#8c8c8c"/><rect x="1072.7" y="175.2" width="28.200000000000045" height="1.8" fill="#8c8c8c"/><rect x="1072.7" y="181.7" width="28.200000000000045" height="1.8" fill="#8c8c8c"/><rect x="1081.2" y="165.2" width="1.8" height="23.80000000000001" fill="#8c8c8c"/><rect x="1090.6" y="165.2" width="1.8" height="23.80000000000001" fill="#8c8c8c"/><rect x="1068" y="183" width="21" height="14" fill="#f0f0f3"/><circle cx="1074.1" cy="192.6" r="2.8" fill="none" stroke="#8c8c8c" stroke-width="1.6"/><circle cx="1083.0" cy="192.6" r="2.8" fill="none" stroke="#8c8c8c" stroke-width="1.6"/><path d="M1069.8 190.9H1087.3M1071.9 190.9L1077.1 184.1M1085.2 190.9L1080.0 184.1" stroke="#8c8c8c" stroke-width="1.6" fill="none"/><rect x="1132.6" y="165.2" width="29.6" height="5.3" fill="#8c8c8c"/><rect x="1140.4" y="175.9" width="21.8" height="5.3" fill="#8c8c8c"/><rect x="1140.4" y="186.5" width="21.8" height="5.4" fill="#8c8c8c"/><path d="M1137 173H1134Q1129.2 175 1129.2 184.5Q1129.2 194 1134 196.2H1137V191.5H1134.5V177.5H1137Z" fill="#8c8c8c"/><rect x="1228.1000000000001" y="166.1" width="26.400000000000045" height="22.00000000000001" fill="#fff" stroke="#444444" stroke-width="1.8"/><rect x="1227.2" y="165.2" width="28.200000000000045" height="4.5" fill="#444444"/><rect x="1227.2" y="175.2" width="28.200000000000045" height="1.8" fill="#444444"/><rect x="1227.2" y="181.7" width="28.200000000000045" height="1.8" fill="#444444"/><rect x="1235.7" y="165.2" width="1.8" height="23.80000000000001" fill="#444444"/><rect x="1245.1" y="165.2" width="1.8" height="23.80000000000001" fill="#444444"/><path d="M1224.3 179.75A8.75 3.85 0 0 1 1241.8 179.75V192.35A8.75 3.85 0 0 1 1224.3 192.35Z" fill="#444444"/><ellipse cx="1233.05" cy="180.25" rx="6.75" ry="2.2" fill="#f2f2f2"/><rect x="1228" y="184.5" width="10" height="9.5" fill="#111"/><path d="M1229.5 186.5H1236.5M1233 186.5V193" stroke="#eee" stroke-width="1.5"/><rect x="1284.0" y="163.7" width="5.6" height="5.6" fill="#444444"/><rect x="1291.3" y="163.7" width="5.6" height="5.6" fill="#444444"/><rect x="1298.6" y="163.7" width="5.6" height="5.6" fill="#444444"/><rect x="1284.0" y="171.0" width="5.6" height="5.6" fill="#444444"/><rect x="1291.3" y="171.0" width="5.6" height="5.6" fill="#444444"/><rect x="1298.6" y="171.0" width="5.6" height="5.6" fill="#444444"/><rect x="1284.0" y="178.3" width="5.6" height="5.6" fill="#444444"/><rect x="1291.3" y="178.3" width="5.6" height="5.6" fill="#444444"/><rect x="1298.6" y="178.3" width="5.6" height="5.6" fill="#444444"/><rect x="1270" y="174" width="21" height="24" fill="#f0f0f3"/><path d="M1271.9 179.83799999999997A8.949999999999932 3.93799999999997 0 0 1 1289.8 179.83799999999997V192.26200000000003A8.949999999999932 3.93799999999997 0 0 1 1271.9 192.26200000000003Z" fill="#444444"/><ellipse cx="1280.85" cy="180.33799999999997" rx="6.949999999999932" ry="2.3" fill="#f2f2f2"/><circle cx="1341" cy="176.4" r="11" fill="#fff" stroke="#444444" stroke-width="1.6"/><path d="M1330 172.6H1352M1330 180.2H1352M1337.2 165.4V187.4M1344.8 165.4V187.4" stroke="#444444" stroke-width="1.6"/><rect x="1318" y="182" width="20" height="16" fill="#f0f0f3"/><circle cx="1328.7" cy="177.3" r="4.6" fill="#444444"/><path d="M1320 185H1325L1328.4 188L1332 185H1336.4V196.2H1320Z" fill="#444444"/><rect x="1327.4" y="190" width="2" height="2" fill="#fff"/><path d="M12.1 266.3L25.1 266.3M14.0 261.7L23.2 270.9M18.6 259.8L18.6 272.8M23.2 261.7L14.0 270.9" stroke="#e39e2c" stroke-width="1.6"/><circle cx="18.6" cy="266.3" r="2.2" fill="#fff" stroke="#e39e2c" stroke-width="1.2"/><rect x="15.9" y="268.3" width="26.299999999999997" height="21.70000000000001" fill="#fff" stroke="#444444" stroke-width="1.6"/><rect x="15.1" y="267.5" width="27.9" height="5" fill="#444444"/><rect x="15.1" y="277.8" width="27.9" height="1.6" fill="#444444"/><rect x="15.1" y="283.9" width="27.9" height="1.6" fill="#444444"/><rect x="23.6" y="267.5" width="1.6" height="23.30000000000001" fill="#444444"/><rect x="32.9" y="267.5" width="1.6" height="23.30000000000001" fill="#444444"/><rect x="13" y="266" width="14" height="6.5" fill="#f0f0f3"/><path d="M12.1 266.3L25.1 266.3M14.0 261.7L23.2 270.9M18.6 259.8L18.6 272.8M23.2 261.7L14.0 270.9" stroke="#e39e2c" stroke-width="1.6"/><circle cx="18.6" cy="266.3" r="2.2" fill="#fff" stroke="#e39e2c" stroke-width="1.2"/><rect x="62.5" y="268.3" width="26.29999999999999" height="21.70000000000001" fill="#fff" stroke="#444444" stroke-width="1.6"/><rect x="61.7" y="267.5" width="27.89999999999999" height="5" fill="#444444"/><rect x="61.7" y="277.8" width="27.89999999999999" height="1.6" fill="#444444"/><rect x="61.7" y="283.9" width="27.89999999999999" height="1.6" fill="#444444"/><rect x="70.2" y="267.5" width="1.6" height="23.30000000000001" fill="#444444"/><rect x="79.5" y="267.5" width="1.6" height="23.30000000000001" fill="#444444"/><path d="M75 281L94 263.5" stroke="#fff" stroke-width="9"/><path d="M76.5 280L91.5 266" stroke="#1a63b0" stroke-width="6"/><path d="M74.5 282.5L76.5 277L80 280.5Z" fill="#444"/><path d="M90 262.5L94.5 267" stroke="#1a63b0" stroke-width="3"/><rect x="116.39999999999999" y="262.40000000000003" width="22.100000000000016" height="20.199999999999953" fill="#fff" stroke="#444444" stroke-width="1.6"/><rect x="115.6" y="261.6" width="23.700000000000017" height="4" fill="#444444"/><rect x="115.6" y="270.7" width="23.700000000000017" height="1.6" fill="#444444"/><rect x="115.6" y="276.7" width="23.700000000000017" height="1.6" fill="#444444"/><rect x="122.7" y="261.6" width="1.6" height="21.799999999999955" fill="#444444"/><rect x="130.6" y="261.6" width="1.6" height="21.799999999999955" fill="#444444"/><circle cx="116.8" cy="278.5" r="7.5" fill="#f0f0f3"/><circle cx="116.8" cy="278.5" r="6" fill="#fff" stroke="#444444" stroke-width="1.6"/><path d="M121 283L128.5 290.5" stroke="#444444" stroke-width="3.2" stroke-linecap="round"/><rect x="182.8" y="260.90000000000003" width="17.099999999999987" height="15.499999999999966" fill="#fff" stroke="#444444" stroke-width="1.6"/><rect x="182" y="260.1" width="18.69999999999999" height="4" fill="#444444"/><rect x="182" y="267.7" width="18.69999999999999" height="1.6" fill="#444444"/><rect x="182" y="272.0" width="18.69999999999999" height="1.6" fill="#444444"/><rect x="187.4" y="260.1" width="1.6" height="17.099999999999966" fill="#444444"/><rect x="193.7" y="260.1" width="1.6" height="17.099999999999966" fill="#444444"/><rect x="168.8" y="271.40000000000003" width="17.099999999999987" height="15.499999999999966" fill="#fff" stroke="#444444" stroke-width="1.6"/><rect x="168" y="270.6" width="18.69999999999999" height="4" fill="#444444"/><rect x="168" y="278.2" width="18.69999999999999" height="1.6" fill="#444444"/><rect x="168" y="282.5" width="18.69999999999999" height="1.6" fill="#444444"/><rect x="173.4" y="270.6" width="1.6" height="17.099999999999966" fill="#444444"/><rect x="179.7" y="270.6" width="1.6" height="17.099999999999966" fill="#444444"/><circle cx="190.2" cy="283.4" r="9.5" fill="#f0f0f3"/><path d="M183.5 285A7 7 0 0 1 194.5 277.5M197 282A7 7 0 0 1 186 289.5" fill="none" stroke="#1a63b0" stroke-width="2.6"/><path d="M192 274L197.5 277.5L191.5 280.5Z" fill="#1a63b0"/><path d="M188.5 286.5L183 289.5L189 292.5Z" fill="#1a63b0"/><rect x="226.6" y="258.5" width="16" height="16" fill="#444444"/><rect x="246.4" y="258.5" width="15.6" height="16" fill="#444444"/><text x="234.6" y="272.5" text-anchor="middle" font-family="Liberation Sans" font-weight="bold" font-size="14" fill="#fff">A</text><text x="254.2" y="272.5" text-anchor="middle" font-family="Liberation Sans" font-weight="bold" font-size="14" fill="#fff">1</text><rect x="231.3" y="276.8" width="26.4" height="17.1" fill="#444444"/><rect x="244.5" y="278.3" width="11.7" height="14.1" fill="#fff"/><path d="M232.5 285.3L238.5 279.5V283H244.5V287.5H238.5V291Z" fill="#fff"/><path d="M255.5 285.3L249.5 279.5V283H244.5V287.5H249.5V291Z" fill="#444444"/><rect x="269" y="252.7" width="47" height="47" fill="#eef2f6" stroke="#6fa3cf" stroke-width="1.4"/><path d="M278.7 264.4H306.2L295 279.5V290.8H289.9V279.5Z" fill="#444444"/><path d="M325.6 268.238A11.449999999999989 5.037999999999995 0 0 1 348.5 268.238V284.562A11.449999999999989 5.037999999999995 0 0 1 325.6 284.562Z" fill="#444444"/><ellipse cx="337.05" cy="268.738" rx="9.449999999999989" ry="3.4" fill="#f2f2f2"/><path d="M350 276V280M354.5 276V280" stroke="#444444" stroke-width="1.6"/><path d="M347.5 280H357V283L353.5 286.5V291H351V286.5L347.5 283Z" fill="#444444"/><rect x="424.2" y="261.2" width="3.4" height="27.1" fill="#444444"/><rect x="454.3" y="261.2" width="3.4" height="27.1" fill="#444444"/><path d="M433.4 274.7L450 264.1V285.4Z" fill="#444444"/><path d="M478.1 274.7L498 262.1V287.4Z" fill="#444444"/><rect x="525.2" y="261.2" width="23.7" height="27.1" fill="none" stroke="#444444" stroke-width="3"/><rect x="531" y="268.9" width="12.1" height="3.9" fill="#444444"/><rect x="531" y="276.7" width="12.1" height="3.9" fill="#444444"/><path d="M576.1 262.1L596 274.7L576.1 287.4Z" fill="#444444"/><rect x="615.9" y="261.2" width="3.4" height="27.1" fill="#444444"/><rect x="646" y="261.2" width="3.4" height="27.1" fill="#444444"/><path d="M623.7 264.1L640.2 274.7L623.7 285.4Z" fill="#444444"/><path d="M687 282L705.5 264.5" stroke="#1a5fa8" stroke-width="6"/><path d="M682.5 286.4L684 280.5L688.5 285Z" fill="#444"/><path d="M704 262L708 266" stroke="#1a5fa8" stroke-width="3.5"/><path d="M727.6 261.2H749.4939999999999L754.3 266.006V287.8H727.6Z" fill="#8c8c8c"/><rect x="733.5" y="261.2" width="15.0" height="12.0" fill="#f7f7f7"/><rect x="741.0" y="261.7" width="4.0" height="5.3" fill="#8c8c8c"/><path d="M778.5 263.5L803 286.5" stroke="#8c8c8c" stroke-width="2.2" stroke-linecap="round"/><path d="M801.5 261.5L777.5 285" stroke="#8c8c8c" stroke-width="3.8" stroke-linecap="round"/><rect x="835.65" y="260.95" width="26.600000000000023" height="27.100000000000023" fill="#f2f5f8" stroke="#444444" stroke-width="2.5"/><rect x="834.4" y="259.7" width="29.100000000000023" height="5.8" fill="#444444"/><path d="M854.5 272.5A6.8 6.8 0 1 0 855.5 282" fill="none" stroke="#1a5fa8" stroke-width="2.4"/><path d="M850 268L856 271L851 275.5Z" fill="#1a5fa8"/><rect x="893.4" y="260.8" width="31.1" height="26.5" fill="#fafafa" stroke="#444444" stroke-width="1.3"/><rect x="899.2" y="260.2" width="3.5" height="27.7" fill="#444444"/><path d="M909.7 260.5V287.5M917.3 260.5V287.5M893 269.5H925M893 278.5H925" stroke="#444444" stroke-width="1.2"/><rect x="958.0" y="259.2" width="11.2" height="15.9" fill="#fafafa" stroke="#444444" stroke-width="1.6"/><rect x="957.2" y="258.4" width="12.8" height="4" fill="#444444"/><rect x="957.2" y="267.59999999999997" width="12.8" height="1.6" fill="#444444"/><rect x="950.6999999999999" y="266.8" width="11.2" height="15.9" fill="#fafafa" stroke="#444444" stroke-width="1.6"/><rect x="949.9" y="266" width="12.8" height="4" fill="#444444"/><rect x="949.9" y="275.2" width="12.8" height="1.6" fill="#444444"/><rect x="944.5999999999999" y="272.90000000000003" width="11.2" height="15.9" fill="#fafafa" stroke="#444444" stroke-width="1.6"/><rect x="943.8" y="272.1" width="12.8" height="4" fill="#444444"/><rect x="943.8" y="281.3" width="12.8" height="1.6" fill="#444444"/><rect x="990.5" y="260.7" width="4.6" height="4.2" fill="#fff" stroke="#444444" stroke-width="1.4"/><rect x="990" y="268" width="3.9" height="21.6" fill="#444444"/><rect x="997.6" y="260.2" width="22.2" height="3.5" fill="#444444"/><path d="M1008 280H998.6V268.2H1019V276M1008.9 268.2V281M998.6 289H1013" fill="none" stroke="#444444" stroke-width="1.3"/><path d="M998.6 280V289" stroke="#444444" stroke-width="1.3"/><path d="M1010 281C1015 277 1022 280 1021 286C1020.5 290 1017 292 1014 292.8" fill="none" stroke="#1a5fa8" stroke-width="2.2"/><path d="M1008.5 277.5V285H1016Z" fill="#1a5fa8"/><path d="M1279 220L1291 232M1291 220L1279 232" stroke="#fff" stroke-width="2.2"/><path d="M2363.5 218.5L2356.8 224.6L2363.5 231Z" fill="none" stroke="#777" stroke-width="1.3"/><path d="M2381 218.5L2387.8 224.6L2381 231Z" fill="none" stroke="#777" stroke-width="1.3"/><path d="M2398.6 220.4H2412L2405.3 227.8Z" fill="#777"/><path d="M2423 218.5L2435.5 230.5M2435.5 218.5L2423 230.5" stroke="#777" stroke-width="2"/><path d="M353.1 219.8H359.6V230.8H353.1Z" fill="none" stroke="#111" stroke-width="1.8"/><path d="M349.6 231.8H363.1M356.35 231.8V237.3" stroke="#111" stroke-width="2"/><path d="M382 221.2L394.8 234.0M394.8 221.2L382 234.0" stroke="#111" stroke-width="2"/><path d="M2826.5 219.5H2833V230.5H2826.5Z" fill="none" stroke="#111" stroke-width="1.8"/><path d="M2823 231.5H2836.5M2829.75 231.5V237.0" stroke="#111" stroke-width="2"/><path d="M2855.6 221.2L2868.4 234.0M2868.4 221.2L2855.6 234.0" stroke="#111" stroke-width="2"/><path d="M2826.5 738.5H2833V749.5H2826.5Z" fill="none" stroke="#111" stroke-width="1.8"/><path d="M2823 750.5H2836.5M2829.75 750.5V756.0" stroke="#111" stroke-width="2"/><path d="M2856 740.3L2868.8 753.0999999999999M2868.8 740.3L2856 753.0999999999999" stroke="#111" stroke-width="2"/><path d="M2387.5 1239.5H2394V1250.5H2387.5Z" fill="none" stroke="#111" stroke-width="1.8"/><path d="M2384 1251.5H2397.5M2390.75 1251.5V1257.0" stroke="#111" stroke-width="2"/><path d="M2416 1241L2428.8 1253.8M2428.8 1241L2416 1253.8" stroke="#111" stroke-width="2"/><path d="M2854.5 276.5L2861.5 283.3L2868.5 276.5" fill="none" stroke="#555" stroke-width="1.3"/><path d="M20.4 338V754" stroke="#3c3c3c" stroke-width="1.4" stroke-dasharray="1.7 1.4"/><path d="M42.6 343V555" stroke="#3c3c3c" stroke-width="1.4" stroke-dasharray="1.7 1.4"/><path d="M64.7 476V528" stroke="#3c3c3c" stroke-width="1.4" stroke-dasharray="1.7 1.4"/><path d="M65 494.4H75" stroke="#3c3c3c" stroke-width="1.4" stroke-dasharray="1.7 1.4"/><path d="M65 527.6H75" stroke="#3c3c3c" stroke-width="1.4" stroke-dasharray="1.7 1.4"/><rect x="12.85" y="322.45" width="14.5" height="14.5" rx="2" fill="url(#expg)" stroke="#a4a4a4" stroke-width="1.5"/><path d="M15.6 329.7H24.6" stroke="#4d6a9a" stroke-width="1.4"/><rect x="35.4" y="319.40000000000003" width="17.4" height="15.699999999999955" fill="#fff" stroke="#444444" stroke-width="1.6"/><rect x="34.6" y="318.6" width="19.0" height="3.7" fill="#444444"/><rect x="34.6" y="326.0" width="19.0" height="1.6" fill="#444444"/><rect x="34.6" y="330.6" width="19.0" height="1.6" fill="#444444"/><rect x="40.1" y="318.6" width="1.6" height="17.299999999999955" fill="#444444"/><rect x="46.5" y="318.6" width="1.6" height="17.299999999999955" fill="#444444"/><rect x="35.35" y="355.75" width="14.5" height="14.5" rx="2" fill="url(#expg)" stroke="#a4a4a4" stroke-width="1.5"/><path d="M38.1 363H47.1" stroke="#4d6a9a" stroke-width="1.4"/><path d="M42.6 358.5V367.5" stroke="#4d6a9a" stroke-width="1.4"/><rect x="35.35" y="388.95" width="14.5" height="14.5" rx="2" fill="url(#expg)" stroke="#a4a4a4" stroke-width="1.5"/><path d="M38.1 396.2H47.1" stroke="#4d6a9a" stroke-width="1.4"/><path d="M42.6 391.7V400.7" stroke="#4d6a9a" stroke-width="1.4"/><rect x="35.35" y="421.55" width="14.5" height="14.5" rx="2" fill="url(#expg)" stroke="#a4a4a4" stroke-width="1.5"/><path d="M38.1 428.8H47.1" stroke="#4d6a9a" stroke-width="1.4"/><path d="M42.6 424.3V433.3" stroke="#4d6a9a" stroke-width="1.4"/><rect x="35.35" y="454.85" width="14.5" height="14.5" rx="2" fill="url(#expg)" stroke="#a4a4a4" stroke-width="1.5"/><path d="M38.1 462.1H47.1" stroke="#4d6a9a" stroke-width="1.4"/><rect x="35.35" y="553.75" width="14.5" height="14.5" rx="2" fill="url(#expg)" stroke="#a4a4a4" stroke-width="1.5"/><path d="M38.1 561H47.1" stroke="#4d6a9a" stroke-width="1.4"/><path d="M42.6 556.5V565.5" stroke="#4d6a9a" stroke-width="1.4"/><rect x="12.85" y="586.95" width="14.5" height="14.5" rx="2" fill="url(#expg)" stroke="#a4a4a4" stroke-width="1.5"/><path d="M15.6 594.2H24.6" stroke="#4d6a9a" stroke-width="1.4"/><path d="M20.1 589.7V598.7" stroke="#4d6a9a" stroke-width="1.4"/><rect x="35.699999999999996" y="583.8" width="17.4" height="15.600000000000046" fill="#fff" stroke="#444444" stroke-width="1.6"/><rect x="34.9" y="583.0" width="19.0" height="3.7" fill="#444444"/><rect x="34.9" y="590.4" width="19.0" height="1.6" fill="#444444"/><rect x="34.9" y="594.9" width="19.0" height="1.6" fill="#444444"/><rect x="40.4" y="583.0" width="1.6" height="17.200000000000045" fill="#444444"/><rect x="46.8" y="583.0" width="1.6" height="17.200000000000045" fill="#444444"/><rect x="12.85" y="620.05" width="14.5" height="14.5" rx="2" fill="url(#expg)" stroke="#a4a4a4" stroke-width="1.5"/><path d="M15.6 627.3H24.6" stroke="#4d6a9a" stroke-width="1.4"/><path d="M20.1 622.8V631.8" stroke="#4d6a9a" stroke-width="1.4"/><rect x="35.699999999999996" y="616.8999999999999" width="17.4" height="15.600000000000046" fill="#fff" stroke="#444444" stroke-width="1.6"/><rect x="34.9" y="616.0999999999999" width="19.0" height="3.7" fill="#444444"/><rect x="34.9" y="623.5" width="19.0" height="1.6" fill="#444444"/><rect x="34.9" y="628.0" width="19.0" height="1.6" fill="#444444"/><rect x="40.4" y="616.0999999999999" width="1.6" height="17.200000000000045" fill="#444444"/><rect x="46.8" y="616.0999999999999" width="1.6" height="17.200000000000045" fill="#444444"/><rect x="12.85" y="653.15" width="14.5" height="14.5" rx="2" fill="url(#expg)" stroke="#a4a4a4" stroke-width="1.5"/><path d="M15.6 660.4H24.6" stroke="#4d6a9a" stroke-width="1.4"/><path d="M20.1 655.9V664.9" stroke="#4d6a9a" stroke-width="1.4"/><rect x="35.699999999999996" y="649.9999999999999" width="17.4" height="15.600000000000046" fill="#fff" stroke="#444444" stroke-width="1.6"/><rect x="34.9" y="649.1999999999999" width="19.0" height="3.7" fill="#444444"/><rect x="34.9" y="656.6" width="19.0" height="1.6" fill="#444444"/><rect x="34.9" y="661.1" width="19.0" height="1.6" fill="#444444"/><rect x="40.4" y="649.1999999999999" width="1.6" height="17.200000000000045" fill="#444444"/><rect x="46.8" y="649.1999999999999" width="1.6" height="17.200000000000045" fill="#444444"/><rect x="12.85" y="686.25" width="14.5" height="14.5" rx="2" fill="url(#expg)" stroke="#a4a4a4" stroke-width="1.5"/><path d="M15.6 693.5H24.6" stroke="#4d6a9a" stroke-width="1.4"/><path d="M20.1 689.0V698.0" stroke="#4d6a9a" stroke-width="1.4"/><rect x="35.699999999999996" y="683.0999999999999" width="17.4" height="15.600000000000046" fill="#fff" stroke="#444444" stroke-width="1.6"/><rect x="34.9" y="682.3" width="19.0" height="3.7" fill="#444444"/><rect x="34.9" y="689.7" width="19.0" height="1.6" fill="#444444"/><rect x="34.9" y="694.2" width="19.0" height="1.6" fill="#444444"/><rect x="40.4" y="682.3" width="1.6" height="17.200000000000045" fill="#444444"/><rect x="46.8" y="682.3" width="1.6" height="17.200000000000045" fill="#444444"/><rect x="12.85" y="719.35" width="14.5" height="14.5" rx="2" fill="url(#expg)" stroke="#a4a4a4" stroke-width="1.5"/><path d="M15.6 726.6H24.6" stroke="#4d6a9a" stroke-width="1.4"/><path d="M20.1 722.1V731.1" stroke="#4d6a9a" stroke-width="1.4"/><rect x="35.699999999999996" y="716.1999999999999" width="17.4" height="15.600000000000046" fill="#fff" stroke="#444444" stroke-width="1.6"/><rect x="34.9" y="715.4" width="19.0" height="3.7" fill="#444444"/><rect x="34.9" y="722.8" width="19.0" height="1.6" fill="#444444"/><rect x="34.9" y="727.3" width="19.0" height="1.6" fill="#444444"/><rect x="40.4" y="715.4" width="1.6" height="17.200000000000045" fill="#444444"/><rect x="46.8" y="715.4" width="1.6" height="17.200000000000045" fill="#444444"/><rect x="12.85" y="752.45" width="14.5" height="14.5" rx="2" fill="url(#expg)" stroke="#a4a4a4" stroke-width="1.5"/><path d="M15.6 759.7H24.6" stroke="#4d6a9a" stroke-width="1.4"/><path d="M20.1 755.2V764.2" stroke="#4d6a9a" stroke-width="1.4"/><rect x="35.699999999999996" y="749.3" width="17.4" height="15.600000000000046" fill="#fff" stroke="#444444" stroke-width="1.6"/><rect x="34.9" y="748.5" width="19.0" height="3.7" fill="#444444"/><rect x="34.9" y="755.9" width="19.0" height="1.6" fill="#444444"/><rect x="34.9" y="760.4" width="19.0" height="1.6" fill="#444444"/><rect x="40.4" y="748.5" width="1.6" height="17.200000000000045" fill="#444444"/><rect x="46.8" y="748.5" width="1.6" height="17.200000000000045" fill="#444444"/><rect x="65.7" y="350.7" width="9" height="9.3" fill="#fff" stroke="#444444" stroke-width="1.4"/><rect x="65" y="350" width="10.4" height="2.6" fill="#444444"/><rect x="65" y="355" width="10.4" height="1.3" fill="#444444"/><rect x="61.7" y="355.7" width="9" height="9.3" fill="#fff" stroke="#444444" stroke-width="1.4"/><rect x="61" y="355" width="10.4" height="2.6" fill="#444444"/><rect x="61" y="360" width="10.4" height="1.3" fill="#444444"/><rect x="57.400000000000006" y="361.2" width="9" height="9.3" fill="#fff" stroke="#444444" stroke-width="1.4"/><rect x="56.7" y="360.5" width="10.4" height="2.6" fill="#444444"/><rect x="56.7" y="365.5" width="10.4" height="1.3" fill="#444444"/><rect x="56" y="383.3" width="9.3" height="8.6" fill="#444444"/><text x="60.6" y="391" text-anchor="middle" font-family="Liberation Sans" font-weight="bold" font-size="9" fill="#fff">A</text><path d="M56.5 393.5H64.5L57 400.5H65" fill="none" stroke="#444444" stroke-width="2"/><path d="M72.4 387V398" stroke="#1a5fa8" stroke-width="2.4"/><path d="M68.4 395L72.4 400.5L76.4 395Z" fill="#1a5fa8"/><rect x="62.5" y="417.2" width="7.2" height="5.5" fill="none" stroke="#444444" stroke-width="1.4"/><path d="M66 422.7V426.5M59.5 430V426.5H72.5V430" fill="none" stroke="#444444" stroke-width="1.4"/><rect x="56.2" y="430.3" width="7.6" height="5.8" fill="none" stroke="#444444" stroke-width="1.4"/><rect x="68.1" y="430.3" width="7.6" height="5.8" fill="none" stroke="#444444" stroke-width="1.4"/><path d="M55.5 453.37A6.75 2.97 0 0 1 69 453.37V464.63A6.75 2.97 0 0 1 55.5 464.63Z" fill="#444444"/><ellipse cx="62.25" cy="453.87" rx="4.75" ry="1.4" fill="#f2f2f2"/><path d="M71 461V463.5M74.5 461V463.5" stroke="#444444" stroke-width="1.2"/><path d="M69.5 463.5H76.4V465L73.7 467V470.5H72.2V467L69.5 465Z" fill="#444444"/><path d="M83.2 484.7L94 492.3L83.2 500.4Z" fill="none" stroke="#666" stroke-width="1.3"/><path d="M83.2 517.8L94 525.5L83.2 533.5Z" fill="none" stroke="#666" stroke-width="1.3"/><path d="M56.2 550.5H65.6V564.1H56.2Z M66.6 550.5H76.0V564.1H66.6Z" fill="#f2f2f2" stroke="#444444" stroke-width="1.4"/><rect x="64.8" y="550.8" width="2.6" height="15.800000000000068" fill="#444444"/><path d="M2490.5 347V602" stroke="#3c3c3c" stroke-width="1.4" stroke-dasharray="1.7 1.4"/><path d="M2512.9 380V503" stroke="#3c3c3c" stroke-width="1.4" stroke-dasharray="1.7 1.4"/><path d="M2513 403H2523" stroke="#3c3c3c" stroke-width="1.4" stroke-dasharray="1.7 1.4"/><path d="M2513 436H2523" stroke="#3c3c3c" stroke-width="1.4" stroke-dasharray="1.7 1.4"/><path d="M2513 469.2H2523" stroke="#3c3c3c" stroke-width="1.4" stroke-dasharray="1.7 1.4"/><path d="M2513 502.5H2523" stroke="#3c3c3c" stroke-width="1.4" stroke-dasharray="1.7 1.4"/><rect x="2460.75" y="329.75" width="14.5" height="14.5" rx="2" fill="url(#expg)" stroke="#a4a4a4" stroke-width="1.5"/><path d="M2463.5 337H2472.5" stroke="#4d6a9a" stroke-width="1.4"/><rect x="2483.45" y="362.95" width="14.5" height="14.5" rx="2" fill="url(#expg)" stroke="#a4a4a4" stroke-width="1.5"/><path d="M2486.2 370.2H2495.2" stroke="#4d6a9a" stroke-width="1.4"/><rect x="2483.25" y="527.85" width="14.5" height="14.5" rx="2" fill="url(#expg)" stroke="#a4a4a4" stroke-width="1.5"/><path d="M2486.0 535.1H2495.0" stroke="#4d6a9a" stroke-width="1.4"/><path d="M2490.5 530.6V539.6" stroke="#4d6a9a" stroke-width="1.4"/><rect x="2483.25" y="561.15" width="14.5" height="14.5" rx="2" fill="url(#expg)" stroke="#a4a4a4" stroke-width="1.5"/><path d="M2486.0 568.4H2495.0" stroke="#4d6a9a" stroke-width="1.4"/><path d="M2490.5 563.9V572.9" stroke="#4d6a9a" stroke-width="1.4"/><rect x="2483.25" y="593.75" width="14.5" height="14.5" rx="2" fill="url(#expg)" stroke="#a4a4a4" stroke-width="1.5"/><path d="M2486.0 601H2495.0" stroke="#4d6a9a" stroke-width="1.4"/><path d="M2490.5 596.5V605.5" stroke="#4d6a9a" stroke-width="1.4"/><path d="M2483.8 340.5V325.7H2501V343.5H2491.8" fill="none" stroke="#444444" stroke-width="1.6"/><rect x="2482.8" y="324.7" width="19.199999999999818" height="3" fill="#444444"/><circle cx="2486" cy="339.5" r="6.3" fill="#fff" stroke="#444444" stroke-width="1.3"/><path d="M2479.7 337.3H2492.3M2479.7 341.7H2492.3M2483.8 333.2V345.8M2488.2 333.2V345.8" stroke="#444444" stroke-width="1.3"/><path d="M2506 373V358.5H2522V376H2514" fill="none" stroke="#444444" stroke-width="1.6"/><rect x="2505" y="357.5" width="18" height="3" fill="#444444"/><circle cx="2508" cy="372.3" r="6" fill="#fff" stroke="#444444" stroke-width="1.3"/><path d="M2502 370.2H2514M2502 374.4H2514M2505.9 366.3V378.3M2510.1 366.3V378.3" stroke="#444444" stroke-width="1.3"/><rect x="2512" y="364" width="6" height="2.5" fill="#444444"/><rect x="2513" y="368.5" width="2.5" height="2" fill="#444444"/><path d="M2529.6000000000004 392.8H2538.8L2543.3 397.3V409.5H2529.6000000000004Z" fill="#fafafa" stroke="#444444" stroke-width="1.6"/><path d="M2538.8 392.5V397.3H2543.6000000000004Z" fill="#444444"/><path d="M2532.3 399.5H2540.6000000000004M2532.3 402.5H2540.6000000000004M2532.3 405.5H2540.6000000000004M2532.3 396.5H2536.8" stroke="#444444" stroke-width="1.2"/><path d="M2529.6000000000004 425.8H2538.8L2543.3 430.3V442.5H2529.6000000000004Z" fill="#fafafa" stroke="#444444" stroke-width="1.6"/><path d="M2538.8 425.5V430.3H2543.6000000000004Z" fill="#444444"/><path d="M2532.3 432.5H2540.6000000000004M2532.3 435.5H2540.6000000000004M2532.3 438.5H2540.6000000000004M2532.3 429.5H2536.8" stroke="#444444" stroke-width="1.2"/><path d="M2529.6000000000004 459.2H2538.8L2543.3 463.7V475.9H2529.6000000000004Z" fill="#fafafa" stroke="#444444" stroke-width="1.6"/><path d="M2538.8 458.9V463.7H2543.6000000000004Z" fill="#444444"/><path d="M2532.3 465.9H2540.6000000000004M2532.3 468.9H2540.6000000000004M2532.3 471.9H2540.6000000000004M2532.3 462.9H2536.8" stroke="#444444" stroke-width="1.2"/><path d="M2529.6000000000004 492.5H2538.8L2543.3 497.0V509.2H2529.6000000000004Z" fill="#fafafa" stroke="#444444" stroke-width="1.6"/><path d="M2538.8 492.2V497.0H2543.6000000000004Z" fill="#444444"/><path d="M2532.3 499.2H2540.6000000000004M2532.3 502.2H2540.6000000000004M2532.3 505.2H2540.6000000000004M2532.3 496.2H2536.8" stroke="#444444" stroke-width="1.2"/><circle cx="2510.5" cy="536.5" r="6.5" fill="#fff" stroke="#444444" stroke-width="1.3"/><path d="M2504.0 534.2H2517.0M2504.0 538.8H2517.0M2508.2 530.0V543.0M2512.8 530.0V543.0" stroke="#444444" stroke-width="1.3"/><circle cx="2518.5" cy="529" r="5" fill="none" stroke="#444444" stroke-width="1.3"/><path d="M2505 527.5V523.5H2511M2524 536V542.5H2518" fill="none" stroke="#444444" stroke-width="1.3"/><path d="M2504.2 557.5H2513.5V571.2H2504.2Z M2514.5 557.5H2523.8V571.2H2514.5Z" fill="#f2f2f2" stroke="#444444" stroke-width="1.4"/><rect x="2512.7" y="557.8" width="2.6" height="15.900000000000091" fill="#444444"/><path d="M2511 594V590.5H2519.5L2523 594V606" fill="none" stroke="#444444" stroke-width="1.3"/><path d="M2508 597V593.5H2516.5L2520 597V608" fill="none" stroke="#444444" stroke-width="1.3"/><path d="M2505.6 596.6H2512.5L2516.5 600.6V609.2H2505.6Z" fill="#fafafa" stroke="#444444" stroke-width="1.3"/><path d="M2508 602H2514M2508 604.5H2514M2508 607H2514" stroke="#444444" stroke-width="1"/><path d="M22 1478V1474.2H38.5V1492" fill="none" stroke="#444444" stroke-width="1.6"/><rect x="22" y="1473.4" width="17" height="2.6" fill="#444444"/><path d="M16 1483V1479.2H33" fill="none" stroke="#444444" stroke-width="1.6"/><rect x="16" y="1478.6" width="17" height="2.6" fill="#444444"/><rect x="10.95" y="1484.75" width="17.3" height="17.700000000000045" fill="#fff" stroke="#444444" stroke-width="1.5"/><rect x="10.2" y="1484" width="18.8" height="3" fill="#444444"/><rect x="10.2" y="1491.7" width="18.8" height="1.5" fill="#444444"/><rect x="10.2" y="1497.0" width="18.8" height="1.5" fill="#444444"/><rect x="15.7" y="1484" width="1.5" height="19.200000000000045" fill="#444444"/><rect x="22.0" y="1484" width="1.5" height="19.200000000000045" fill="#444444"/><circle cx="28.5" cy="1491" r="6" fill="#fff" stroke="#fff" stroke-width="1"/><circle cx="28.5" cy="1491" r="5" fill="#fff" stroke="#444444" stroke-width="1.5"/><path d="M32 1494.5L38 1500.5" stroke="#444444" stroke-width="2.6" stroke-linecap="round"/><rect x="146.55" y="1474.65" width="24.599999999999994" height="23.59999999999991" fill="#f7f7f7" stroke="#444444" stroke-width="2.5"/><rect x="145.3" y="1473.4" width="27.099999999999994" height="5" fill="#444444"/><path d="M149.5 1486L154 1481.5L158 1485.5L153.5 1490Z" fill="#d9962c"/><path d="M155.5 1488V1494H161M155.5 1488H161" fill="none" stroke="#d9962c" stroke-width="1.3"/><rect x="160" y="1485" width="5" height="5" fill="#d9962c"/><rect x="160" y="1492" width="5" height="5" fill="#d9962c"/><path d="M292 1473.4C302 1472.5 305 1477 303.5 1482C302 1486 296.5 1487 297 1490.5C297.5 1494 303.5 1494 303 1497C302.5 1500 295 1500.5 289.5 1500C281 1499.5 277.5 1493 277.7 1486.5C278 1478 283 1474 292 1473.4Z" fill="#444444"/><rect x="281" y="1484" width="4" height="4" fill="#fff"/><rect x="286" y="1478.6" width="4" height="4" fill="#fff"/><rect x="292.5" y="1476.2" width="4" height="4" fill="#fff"/><rect x="281" y="1491.5" width="4" height="4" fill="#fff"/><rect x="286" y="1494.5" width="4" height="4" fill="#fff"/><rect x="429.75" y="1474.65" width="24.600000000000023" height="23.59999999999991" fill="#f7f7f7" stroke="#444444" stroke-width="2.5"/><rect x="428.5" y="1473.4" width="27.100000000000023" height="5" fill="#444444"/><path d="M437.2 1482.5L442.6 1493.5H431.8Z" fill="#f2c12e"/><path d="M437.2 1485.5V1489.5M437.2 1490.8V1492" stroke="#4a3000" stroke-width="1.2"/><path d="M443 1488L446 1491.5L452 1481" fill="none" stroke="#444444" stroke-width="2"/><path d="M834.5 1475H816.2V1500H834.5" fill="none" stroke="#444444" stroke-width="2"/><path d="M823 1485.5H829V1480.5L840.2 1487.5L829 1494.5V1489.5H823Z" fill="#444444"/><path d="M947.5 1478.5H944.8V1499H963.5V1489" fill="none" stroke="#444444" stroke-width="2"/><path d="M947.5 1480L949.5 1477.5H958L960 1480Z" fill="#444444"/><circle cx="953.8" cy="1475.8" r="2.5" fill="#f0f0f0" stroke="#444444" stroke-width="1.5"/><path d="M949 1487.5L953.5 1493.5L963.5 1480" fill="none" stroke="#444444" stroke-width="2.8"/><path d="M1240 1485V1474.5H1251.5L1256.2 1479.2V1499H1245" fill="none" stroke="#444444" stroke-width="1.8"/><path d="M1251.3 1474V1479.5H1256.7Z" fill="#444444"/><circle cx="1242.5" cy="1491.5" r="4" fill="#eef6ff" stroke="#1a5fa8" stroke-width="1.6"/><path d="M1239.5 1494.5L1235 1499.5" stroke="#1a5fa8" stroke-width="2.2" stroke-linecap="round"/><path d="M2464.5 1480V1475H2486V1499.5H2470" fill="none" stroke="#444444" stroke-width="1.8"/><path d="M2469 1481H2474M2476.5 1481H2482.5M2469 1486H2474M2476.5 1486H2482.5M2469 1491H2474M2476.5 1491H2482.5M2472 1496H2482.5" stroke="#444444" stroke-width="1.8"/><path d="M2461 1486A4 4 0 0 0 2467.5 1486V1483.5H2466V1486H2462.5V1483.5H2461Z" fill="#444444"/><rect x="2462.5" y="1487" width="3.2" height="10.5" rx="1" fill="#444444"/><path d="M2688 1475.9080000000001A5.7000000000000455 2.50800000000002 0 0 1 2699.4 1475.9080000000001V1485.492A5.7000000000000455 2.50800000000002 0 0 1 2688 1485.492Z" fill="#444444"/><ellipse cx="2693.7" cy="1476.4080000000001" rx="3.7000000000000455" ry="0.9" fill="#f2f2f2"/><rect x="2681" y="1480.5" width="8" height="4" fill="#444444"/><path d="M2685 1484.5V1488.5M2677 1492V1488.5H2692V1492" fill="none" stroke="#444444" stroke-width="1.6"/><rect x="2673" y="1492" width="8" height="5" fill="#444444"/><rect x="2688" y="1492" width="8" height="5" fill="#444444"/><circle cx="2463.8" cy="1530" r="13.2" fill="#fff" stroke="#e0402a" stroke-width="1.8"/><path d="M2463.8 1521V1533.5M2463.8 1536V1539" stroke="#d03020" stroke-width="2.8"/><path d="M747.8 588.2V612L753.2 606.8L757.6 614.8L760.8 613.4L757.6 605.4H764.5Z" fill="#fff" stroke="#3a3a3a" stroke-width="1.5" stroke-linejoin="round"/></svg></body></html>
